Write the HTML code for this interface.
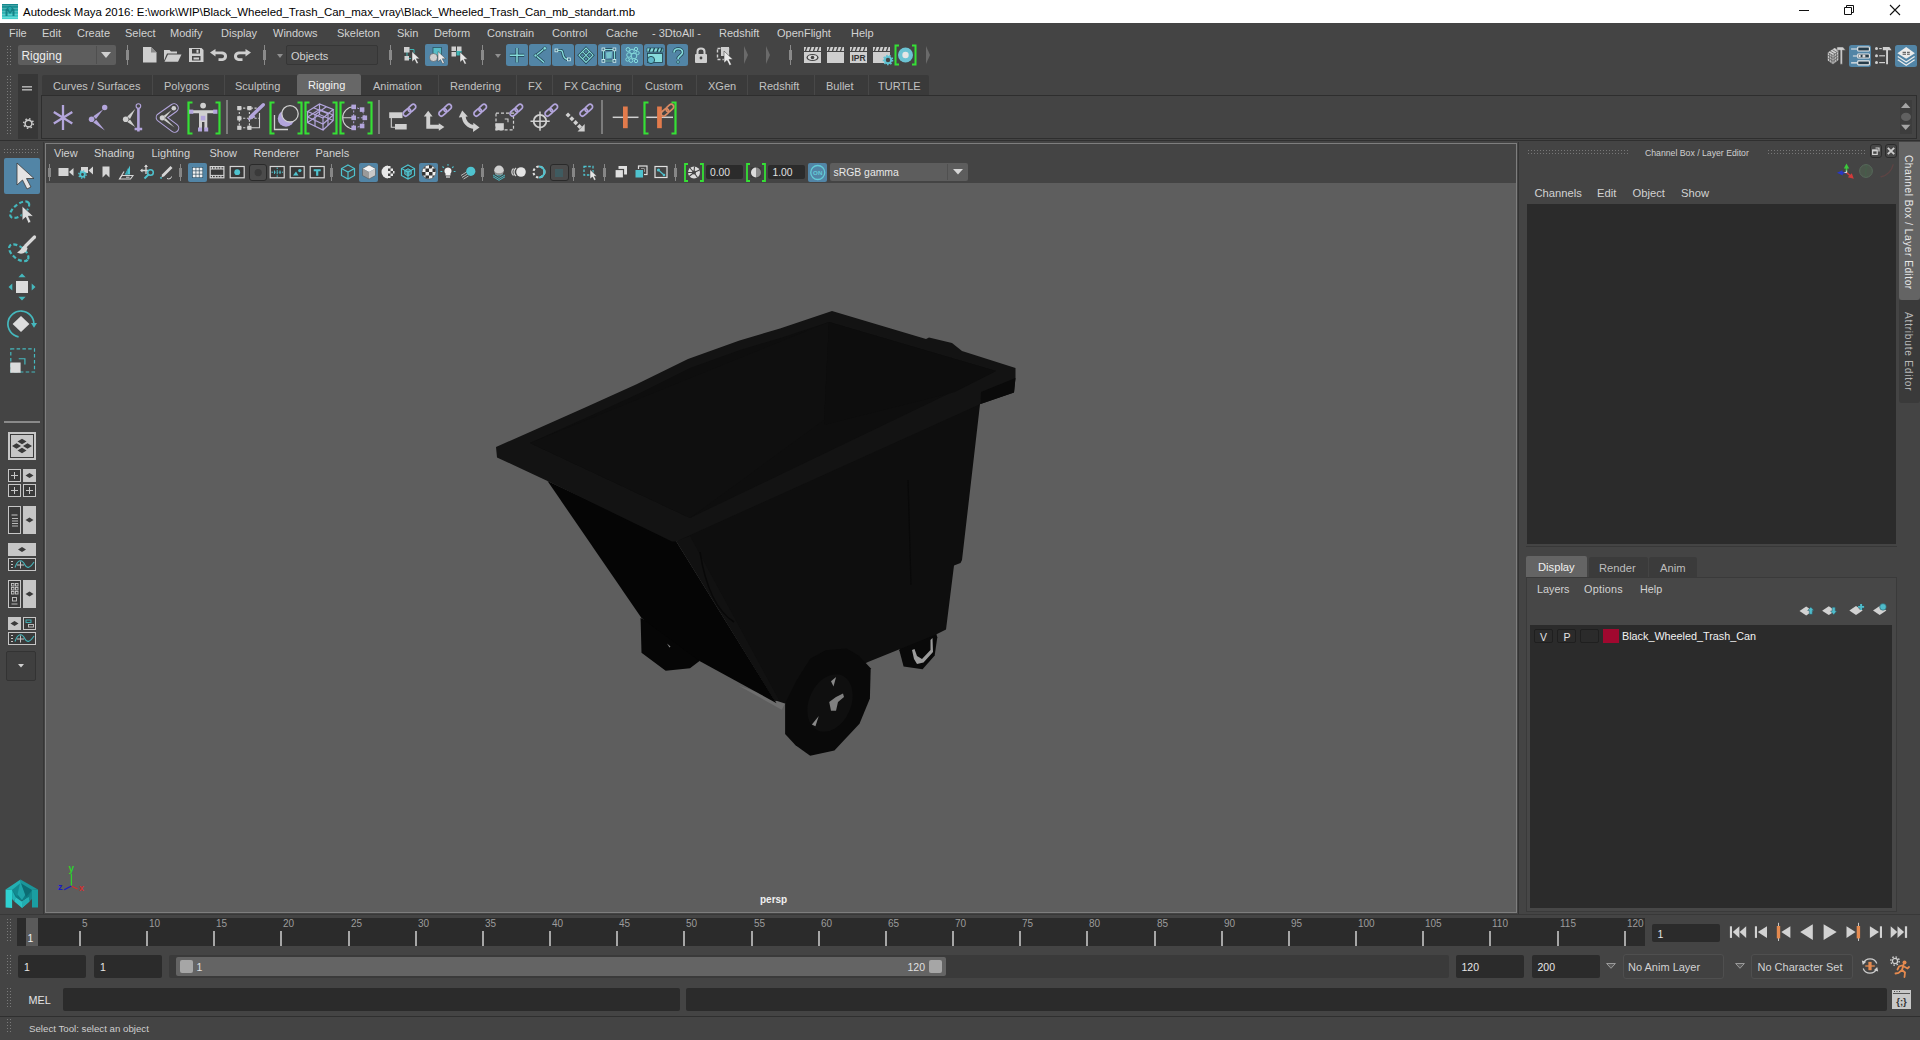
<!DOCTYPE html>
<html lang="en">
<head>
<meta charset="utf-8">
<title>Autodesk Maya 2016</title>
<style>
html,body{margin:0;padding:0;background:#444444;}
body{width:1920px;height:1040px;overflow:hidden;font-family:"Liberation Sans",sans-serif;}
#app{position:relative;width:1920px;height:1040px;background:#444444;overflow:hidden;}
#app div,#app svg,#app span.t{position:absolute;box-sizing:border-box;}
#app svg{overflow:visible;}
span.t{white-space:pre;line-height:normal;font-family:"Liberation Sans",sans-serif;}
</style>
</head>
<body>
<div id="app">
<div style="left:0px;top:0px;width:1920px;height:23px;background:#ffffff;"></div>
<svg style="left:2px;top:4px;" width="16" height="15" viewBox="0 0 16 15"><rect x="0" y="0.0" width="16" height="1.600" fill="rgb(20,136,141)"/><rect x="0" y="1.5" width="16" height="1.600" fill="rgb(25,144,148)"/><rect x="0" y="3.0" width="16" height="1.600" fill="rgb(30,152,155)"/><rect x="0" y="4.5" width="16" height="1.600" fill="rgb(36,160,162)"/><rect x="0" y="6.0" width="16" height="1.600" fill="rgb(41,168,170)"/><rect x="0" y="7.5" width="16" height="1.600" fill="rgb(47,177,177)"/><rect x="0" y="9.0" width="16" height="1.600" fill="rgb(52,185,184)"/><rect x="0" y="10.5" width="16" height="1.600" fill="rgb(57,193,192)"/><rect x="0" y="12.0" width="16" height="1.600" fill="rgb(63,201,199)"/><rect x="0" y="13.5" width="16" height="1.600" fill="rgb(68,209,206)"/><path d="M3.500 12V5.500L8 1.500L12.500 5.500V12H10.500V7L8 10L5.500 7V12Z" fill="#0f7a80" opacity=".85"/><path d="M6 4L8 8L10 4L8 2.500Z" fill="#27aab0" opacity=".9"/></svg>
<span class="t" style="left:23px;top:5.64px;font-size:11.45px;color:#000000;">Autodesk Maya 2016: E:\work\WIP\Black_Wheeled_Trash_Can_max_vray\Black_Wheeled_Trash_Can_mb_standart.mb</span>
<svg style="left:1798px;top:4px;" width="12" height="14" viewBox="0 0 12 14"><path d="M1 6.5H11" stroke="#111" stroke-width="1" fill="none"/></svg>
<svg style="left:1843px;top:3px;" width="12" height="14" viewBox="0 0 12 14"><path d="M1.5 4.5H8.5V11.5H1.5ZM3.5 4.5V2.5H10.5V9.5H8.5" stroke="#111" stroke-width="1" fill="none"/></svg>
<svg style="left:1889px;top:4px;" width="12" height="14" viewBox="0 0 12 14"><path d="M1 1L11 11M11 1L1 11" stroke="#111" stroke-width="1.1" fill="none"/></svg>
<span class="t" style="left:9px;top:27.04px;font-size:11px;color:#d2d2d2;">File</span>
<span class="t" style="left:42px;top:27.04px;font-size:11px;color:#d2d2d2;">Edit</span>
<span class="t" style="left:77px;top:27.04px;font-size:11px;color:#d2d2d2;">Create</span>
<span class="t" style="left:125px;top:27.04px;font-size:11px;color:#d2d2d2;">Select</span>
<span class="t" style="left:170px;top:27.04px;font-size:11px;color:#d2d2d2;">Modify</span>
<span class="t" style="left:221px;top:27.04px;font-size:11px;color:#d2d2d2;">Display</span>
<span class="t" style="left:273px;top:27.04px;font-size:11px;color:#d2d2d2;">Windows</span>
<span class="t" style="left:337px;top:27.04px;font-size:11px;color:#d2d2d2;">Skeleton</span>
<span class="t" style="left:397px;top:27.04px;font-size:11px;color:#d2d2d2;">Skin</span>
<span class="t" style="left:434px;top:27.04px;font-size:11px;color:#d2d2d2;">Deform</span>
<span class="t" style="left:487px;top:27.04px;font-size:11px;color:#d2d2d2;">Constrain</span>
<span class="t" style="left:552px;top:27.04px;font-size:11px;color:#d2d2d2;">Control</span>
<span class="t" style="left:606px;top:27.04px;font-size:11px;color:#d2d2d2;">Cache</span>
<span class="t" style="left:652px;top:27.04px;font-size:11px;color:#d2d2d2;">- 3DtoAll -</span>
<span class="t" style="left:719px;top:27.04px;font-size:11px;color:#d2d2d2;">Redshift</span>
<span class="t" style="left:777px;top:27.04px;font-size:11px;color:#d2d2d2;">OpenFlight</span>
<span class="t" style="left:851px;top:27.04px;font-size:11px;color:#d2d2d2;">Help</span>
<svg style="left:7px;top:46px;" width="4" height="21" viewBox="0 0 4 21"><rect x="0" y="0" width="1" height="1" fill="#7a7a7a"/><rect x="3" y="0" width="1" height="1" fill="#7a7a7a"/><rect x="0" y="3" width="1" height="1" fill="#7a7a7a"/><rect x="3" y="3" width="1" height="1" fill="#7a7a7a"/><rect x="0" y="6" width="1" height="1" fill="#7a7a7a"/><rect x="3" y="6" width="1" height="1" fill="#7a7a7a"/><rect x="0" y="9" width="1" height="1" fill="#7a7a7a"/><rect x="3" y="9" width="1" height="1" fill="#7a7a7a"/><rect x="0" y="12" width="1" height="1" fill="#7a7a7a"/><rect x="3" y="12" width="1" height="1" fill="#7a7a7a"/><rect x="0" y="15" width="1" height="1" fill="#7a7a7a"/><rect x="3" y="15" width="1" height="1" fill="#7a7a7a"/><rect x="0" y="18" width="1" height="1" fill="#7a7a7a"/><rect x="3" y="18" width="1" height="1" fill="#7a7a7a"/></svg>
<div style="left:18px;top:45px;width:98px;height:20px;background:#5d5d5d;border-radius:2px;"></div>
<div style="left:96px;top:46px;width:1px;height:18px;background:#4f4f4f;"></div>
<span class="t" style="left:21.5px;top:49.23px;font-size:11.9px;color:#ececec;">Rigging</span>
<svg style="left:101px;top:52px;" width="10" height="6" viewBox="0 0 10 6"><path d="M0 0H10L5 6Z" fill="#d0d0d0"/></svg>
<div style="left:127px;top:45px;width:1px;height:20px;background:#8a8a8a;"></div><div style="left:126px;top:50px;width:3px;height:10px;background:#8a8a8a;"></div>
<svg style="left:143px;top:47px;" width="14" height="16" viewBox="0 0 14 16"><path d="M0 0H8L13.500 5.500V15.500H0Z" fill="#cfcfcf"/><path d="M8 0V5.500H13.500Z" fill="#8a8a8a"/></svg>
<svg style="left:164px;top:49px;" width="18" height="13" viewBox="0 0 18 13"><path d="M0 1H5.500L7 2.500H13V4.500H3L0 11.500Z" fill="#cfcfcf"/><path d="M4 5.500H17.500L14 12.800H0.500Z" fill="#cfcfcf"/></svg>
<svg style="left:189px;top:48px;" width="15" height="14" viewBox="0 0 15 14"><path d="M0 0H12.500L14.500 2V14H0Z" fill="#cfcfcf"/><rect x="3" y="1" width="8" height="4.500" fill="#444"/><rect x="7.500" y="1.800" width="2" height="3" fill="#cfcfcf"/><rect x="3" y="8" width="8.500" height="4.500" fill="#444"/><rect x="4.500" y="9.500" width="5.500" height="2" fill="#cfcfcf"/></svg>
<svg style="left:210px;top:49px;" width="17" height="12" viewBox="0 0 17 12"><path d="M0 3.500L5.500 0V2.500H11C15 2.500 17 4.500 17 7.200C17 10 15 12 11 12H8.500V9.300H11C13 9.300 14 8.500 14 7.200C14 6 13 5.200 11 5.200H5.500V7.500Z" fill="#cfcfcf"/></svg>
<svg style="left:234px;top:49px;" width="17" height="12" viewBox="0 0 17 12"><path d="M17 3.500L11.500 0V2.500H6C2 2.500 0 4.500 0 7.200C0 10 2 12 6 12H8.500V9.300H6C4 9.300 3 8.500 3 7.200C3 6 4 5.200 6 5.200H11.500V7.500Z" fill="#cfcfcf"/></svg>
<div style="left:264px;top:45px;width:1px;height:20px;background:#8a8a8a;"></div><div style="left:263px;top:50px;width:3px;height:10px;background:#8a8a8a;"></div>
<svg style="left:277px;top:54px;" width="6" height="4" viewBox="0 0 6 4"><path d="M0 0H6L3 4Z" fill="#8f8f8f"/></svg>
<div style="left:286px;top:45px;width:92px;height:20px;background:#414141;border:1px solid #363636;border-radius:2px;"></div>
<span class="t" style="left:291px;top:50.04px;font-size:11px;color:#d2d2d2;">Objects</span>
<div style="left:390px;top:45px;width:1px;height:20px;background:#8a8a8a;"></div><div style="left:389px;top:50px;width:3px;height:10px;background:#8a8a8a;"></div>
<svg style="left:403px;top:46px;" width="18" height="18" viewBox="0 0 18 18"><path d="M4 6V12.500H8M6.500 3.500H11V7" stroke="#3fb5b5" fill="none"/><rect x="1" y="1" width="5.500" height="5.500" fill="#cfcfcf"/><rect x="1.500" y="10" width="4.500" height="4.500" fill="#cfcfcf"/><path transform="translate(9,5.5) scale(0.85)" d="M0 0V12L3 9.5L5.5 14.5L7.5 13.5L5 8.5H9Z" fill="#e8e8e8" stroke="#333" stroke-width=".5"/></svg>
<div style="left:425px;top:44px;width:22.5px;height:22px;background:#5285a6;border-radius:2px;"></div>
<svg style="left:428px;top:46px;" width="18" height="18" viewBox="0 0 18 18"><rect x="5" y="1.500" width="8.500" height="8.500" fill="#57bcc6" stroke="#2c5560" stroke-width=".8"/><circle cx="5.500" cy="11.500" r="4" fill="#cfcfcf" stroke="#444" stroke-width=".5"/><path transform="translate(10,5.5) scale(0.85)" d="M0 0V12L3 9.5L5.5 14.5L7.5 13.5L5 8.5H9Z" fill="#e8e8e8" stroke="#333" stroke-width=".5"/></svg>
<svg style="left:451px;top:46px;" width="18" height="18" viewBox="0 0 18 18"><rect x="5.500" y="4.500" width="5" height="5" fill="#3fb5b5"/><rect x="0.500" y="0.500" width="4.500" height="4.500" fill="#cfcfcf"/><rect x="6" y="0.500" width="4.500" height="4.500" fill="#cfcfcf"/><rect x="0.500" y="6" width="4.500" height="4.500" fill="#cfcfcf"/><path transform="translate(9,6) scale(0.85)" d="M0 0V12L3 9.5L5.5 14.5L7.5 13.5L5 8.5H9Z" fill="#e8e8e8" stroke="#333" stroke-width=".5"/></svg>
<div style="left:482px;top:45px;width:1px;height:20px;background:#8a8a8a;"></div><div style="left:481px;top:50px;width:3px;height:10px;background:#8a8a8a;"></div>
<svg style="left:495px;top:54px;" width="6" height="4" viewBox="0 0 6 4"><path d="M0 0H6L3 4Z" fill="#8f8f8f"/></svg>
<div style="left:506.4px;top:44px;width:21.8px;height:22px;background:#5285a6;border-radius:2.500px;"></div>
<svg style="left:506.4px;top:44px;" width="22" height="22" viewBox="0 0 22 22"><path d="M11 4V18.500M3.800 11.200H18.200" stroke="#1d3f4c" stroke-width="2.9" fill="none" /><path d="M11 4V18.500M3.800 11.200H18.200" stroke="#86dcdc" stroke-width="1.5" fill="none" /></svg>
<div style="left:529.3px;top:44px;width:21.8px;height:22px;background:#5285a6;border-radius:2.500px;"></div>
<svg style="left:529.3px;top:44px;" width="22" height="22" viewBox="0 0 22 22"><path d="M15.500 4.500L7 11.500L15 18.500" stroke="#1d3f4c" stroke-width="2.9" fill="none" /><path d="M15.500 4.500L7 11.500L15 18.500" stroke="#86dcdc" stroke-width="1.5" fill="none" /><circle cx="15.800" cy="4.300" r="1.700" fill="#86dcdc" stroke="#1d3f4c" stroke-width=".6"/><circle cx="6.500" cy="11.500" r="1.500" fill="#86dcdc" stroke="#1d3f4c" stroke-width=".6"/></svg>
<div style="left:552.2px;top:44px;width:21.8px;height:22px;background:#5285a6;border-radius:2.500px;"></div>
<svg style="left:552.2px;top:44px;" width="22" height="22" viewBox="0 0 22 22"><path d="M5 6.500H9C11 6.500 10.500 9.500 11.500 12C12.500 15 14 15.500 17 15.500" stroke="#1d3f4c" stroke-width="2.8" fill="none" /><path d="M5 6.500H9C11 6.500 10.500 9.500 11.500 12C12.500 15 14 15.500 17 15.500" stroke="#86dcdc" stroke-width="1.4" fill="none" /><rect x="3" y="5" width="2.8" height="2.8" fill="#3f6f88" stroke="#d8f2f2" stroke-width=".8"/><rect x="15.5" y="14" width="2.8" height="2.8" fill="#3f6f88" stroke="#d8f2f2" stroke-width=".8"/></svg>
<div style="left:575.0px;top:44px;width:21.8px;height:22px;background:#5285a6;border-radius:2.500px;"></div>
<svg style="left:575.0px;top:44px;" width="22" height="22" viewBox="0 0 22 22"><path d="M11 4L18 11.200L11 18.500L4 11.200ZM7.500 7.600L14.500 14.800M14.500 7.600L7.500 14.800" stroke="#1d3f4c" stroke-width="2.5" fill="none" /><path d="M11 4L18 11.200L11 18.500L4 11.200ZM7.500 7.600L14.500 14.800M14.500 7.600L7.500 14.800" stroke="#86dcdc" stroke-width="1.1" fill="none" /></svg>
<div style="left:597.9px;top:44px;width:21.8px;height:22px;background:#5285a6;border-radius:2.500px;"></div>
<svg style="left:597.9px;top:44px;" width="22" height="22" viewBox="0 0 22 22"><path d="M5.500 5.500H16.500V17H5.500Z" stroke="#1d3f4c" stroke-width="2.6" fill="none" /><path d="M5.500 5.500H16.500V17H5.500Z" stroke="#86dcdc" stroke-width="1.2" fill="none" /><path d="M8 8.500L14 7.500L13.500 14L8.500 14.500Z" fill="#86dcdc" opacity=".7"/><rect x="4" y="4" width="2.8" height="2.8" fill="#3f6f88" stroke="#d8f2f2" stroke-width=".8"/><rect x="15" y="4" width="2.8" height="2.8" fill="#3f6f88" stroke="#d8f2f2" stroke-width=".8"/><rect x="4" y="15.5" width="2.8" height="2.8" fill="#3f6f88" stroke="#d8f2f2" stroke-width=".8"/><rect x="15" y="15.5" width="2.8" height="2.8" fill="#3f6f88" stroke="#d8f2f2" stroke-width=".8"/></svg>
<div style="left:620.8px;top:44px;width:21.8px;height:22px;background:#5285a6;border-radius:2.500px;"></div>
<svg style="left:620.8px;top:44px;" width="22" height="22" viewBox="0 0 22 22"><g stroke="#86dcdc" stroke-width="1" fill="#4b86a5"><circle cx="7" cy="5.500" r="1.900"/><circle cx="11" cy="7.500" r="2.300"/><circle cx="15" cy="5" r="1.700"/><circle cx="8" cy="11" r="2.300"/><circle cx="13" cy="12" r="2.800"/><circle cx="16.500" cy="9" r="1.700"/><circle cx="6.500" cy="15.500" r="1.700"/><circle cx="10" cy="16.500" r="1.900"/><circle cx="15" cy="17" r="1.700"/></g></svg>
<div style="left:643.7px;top:44px;width:21.8px;height:22px;background:#5285a6;border-radius:2.500px;"></div>
<svg style="left:643.7px;top:44px;" width="22" height="22" viewBox="0 0 22 22"><rect x="3.500" y="9.500" width="15" height="9" fill="#86dcdc" stroke="#1d3f4c" stroke-width=".8"/><path d="M3 4H19V8H3Z" fill="#86dcdc" stroke="#1d3f4c" stroke-width=".6"/><path d="M6.500 4L5 8M10.500 4L9 8M14.500 4L13 8M18 4L16.500 8" stroke="#1d3f4c" stroke-width="1.300"/><circle cx="7" cy="16" r="3.600" fill="#5fb9c9" stroke="#1d3f4c" stroke-width=".9"/></svg>
<div style="left:666.6px;top:44px;width:21.8px;height:22px;background:#5285a6;border-radius:2.500px;"></div>
<svg style="left:666.6px;top:44px;" width="22" height="22" viewBox="0 0 22 22"><path d="M7 8.500C7 3.500 15.500 3.500 15.500 8.500C15.500 11.500 11 11.500 11 15" stroke="#1d3f4c" stroke-width="3.1" fill="none" /><path d="M7 8.500C7 3.500 15.500 3.500 15.500 8.500C15.500 11.500 11 11.500 11 15" stroke="#86dcdc" stroke-width="1.7" fill="none" /><circle cx="11" cy="18" r="1.400" fill="#86dcdc" stroke="#1d3f4c" stroke-width=".7"/></svg>
<svg style="left:694px;top:46px;" width="14" height="18" viewBox="0 0 14 18"><path d="M3.5 8V5.5C3.5 1.5 10.5 1.5 10.5 5.5V8" stroke="#cfcfcf" stroke-width="2" fill="none"/><rect x="1" y="8" width="12" height="9" rx="1" fill="#cfcfcf"/><circle cx="7" cy="12" r="1.4" fill="#444"/></svg>
<svg style="left:716px;top:46px;" width="18" height="18" viewBox="0 0 18 18"><rect x="1.5" y="2.5" width="11" height="11" stroke="#cfcfcf" stroke-width="1.4" stroke-dasharray="3 2" fill="none"/><rect x="5" y="1" width="8" height="9" fill="#cfcfcf"/><path transform="translate(8,5) scale(1.0)" d="M0 0V12L3 9.5L5.5 14.5L7.5 13.5L5 8.5H9Z" fill="#e8e8e8" stroke="#333" stroke-width=".5"/></svg>
<svg style="left:744px;top:46px;" width="4" height="18" viewBox="0 0 4 18"><path d="M0 0L4 9.0L0 18Z" fill="#6a6a6a"/></svg>
<svg style="left:766px;top:46px;" width="4" height="18" viewBox="0 0 4 18"><path d="M0 0L4 9.0L0 18Z" fill="#6a6a6a"/></svg>
<div style="left:790px;top:45px;width:1px;height:20px;background:#8a8a8a;"></div><div style="left:789px;top:50px;width:3px;height:10px;background:#8a8a8a;"></div>
<svg style="left:804px;top:47px;" width="17" height="16" viewBox="0 0 17 16"><path d="M0 0H17V4H0Z" fill="#cfcfcf"/><path d="M3 0L1.5 4M7 0L5.5 4M11 0L9.5 4M15 0L13.5 4" stroke="#444" stroke-width="1.3"/><rect x="0" y="5" width="17" height="11" fill="#cfcfcf"/><ellipse cx="8.5" cy="10.5" rx="6" ry="3.6" fill="#444"/><ellipse cx="8.5" cy="10.5" rx="4.6" ry="2.4" fill="#ddd"/><circle cx="8.5" cy="10.5" r="1.8" fill="#444"/></svg>
<svg style="left:827px;top:47px;" width="17" height="16" viewBox="0 0 17 16"><path d="M0 0H17V4H0Z" fill="#cfcfcf"/><path d="M3 0L1.5 4M7 0L5.5 4M11 0L9.5 4M15 0L13.5 4" stroke="#444" stroke-width="1.3"/><rect x="0" y="5" width="17" height="11" fill="#cfcfcf"/></svg>
<svg style="left:850px;top:47px;" width="17" height="16" viewBox="0 0 17 16"><path d="M0 0H17V4H0Z" fill="#cfcfcf"/><path d="M3 0L1.5 4M7 0L5.5 4M11 0L9.5 4M15 0L13.5 4" stroke="#444" stroke-width="1.3"/><rect x="0" y="5" width="17" height="11" fill="#cfcfcf"/><text x="8.5" y="14.3" font-size="8.5" font-weight="bold" text-anchor="middle" fill="#333" font-family="Liberation Sans, sans-serif">IPR</text></svg>
<svg style="left:873px;top:47px;" width="20" height="17" viewBox="0 0 20 17"><path d="M0 0H17V4H0Z" fill="#cfcfcf"/><path d="M3 0L1.5 4M7 0L5.5 4M11 0L9.5 4M15 0L13.5 4" stroke="#444" stroke-width="1.3"/><rect x="0" y="5" width="17" height="11" fill="#cfcfcf"/><circle cx="15" cy="13" r="3.2" fill="#444" stroke="#5fc4d4" stroke-width="2"/><circle cx="15" cy="13" r="4.6" fill="none" stroke="#5fc4d4" stroke-width="1.4" stroke-dasharray="1.6 1.6"/></svg>
<svg style="left:894px;top:44px;" width="23" height="22" viewBox="0 0 23 22"><path d="M5 1.5H1.5V20.5H5M18 1.5H21.5V20.5H18" stroke="#35e035" stroke-width="2" fill="none"/><circle cx="11.5" cy="11" r="7.5" fill="#6cc3d3"/><circle cx="11.5" cy="11" r="3.2" fill="#e6e6e6"/></svg>
<svg style="left:926px;top:46px;" width="4" height="18" viewBox="0 0 4 18"><path d="M0 0L4 9.0L0 18Z" fill="#6a6a6a"/></svg>
<svg style="left:1827px;top:46px;" width="19" height="19" viewBox="0 0 19 19"><path d="M0.800 6.500L7.500 2L11.300 4V14L6 18.200L0.800 14.500Z" fill="#cfcfcf"/><path d="M0.800 6.500L6 9.500L11.300 5.500M6 9.500V18.200M0.800 9.200L6 12.400L11.300 8.500M0.800 11.900L6 15.300L11.300 11.300M2.600 7.500V15.700M4.300 8.500V17M7.800 8.200V16.800M9.600 6.800V15.400M3 5L8 8M5.200 3.500L10 6.500" stroke="#555" stroke-width=".7" fill="none"/><path d="M9.900 1H16L18.600 4.300H15.400V18.200H13.200V4.300H9.900Z" fill="#cfcfcf" stroke="#444" stroke-width=".5"/></svg>
<div style="left:1849px;top:45px;width:22.3px;height:22.2px;background:#5285a6;border-radius:2.500px;"></div>
<svg style="left:1849px;top:45px;" width="22" height="22" viewBox="0 0 22 22"><g stroke="#ececec" stroke-width="1.100" fill="#263c4a"><rect x="8.700" y="2" width="11.700" height="4" rx=".8"/><rect x="8.700" y="9" width="11.700" height="4" rx=".8"/><rect x="8.700" y="15.900" width="11.700" height="4" rx=".8"/></g><path d="M2.100 4H8M3.900 11H8M2.100 17.900H8" stroke="#ececec" stroke-width="1.200"/><circle cx="14.900" cy="11" r="1.600" fill="#d8d8d8"/><rect x="9.600" y="9.800" width="2" height="2.400" fill="#ececec"/></svg>
<svg style="left:1874px;top:46px;" width="19" height="19" viewBox="0 0 19 19"><g fill="#cfcfcf"><circle cx="2.500" cy="2.600" r="1.500"/><circle cx="2.500" cy="9.800" r="1.500"/><circle cx="2.500" cy="16.600" r="1.500"/><rect x="5.200" y="2" width="2.600" height="1.200"/><rect x="5.200" y="9.200" width="5.800" height="1.200"/><rect x="5.200" y="16" width="5.800" height="1.200"/><path d="M8.800 1H15.400L17.600 4.300H14V18.200H12.100V4.300H8.800Z"/></g></svg>
<div style="left:1895px;top:45px;width:22.3px;height:22.2px;background:#5285a6;border-radius:2.500px;"></div>
<svg style="left:1895px;top:45px;" width="22" height="22" viewBox="0 0 22 22"><path d="M2.800 14.800L11.200 20.300L19.600 14.800" stroke="#ececec" stroke-width="1.300" fill="none"/><path d="M2.800 11.500L11.200 17L19.600 11.500" stroke="#ececec" stroke-width="1.300" fill="none"/><path d="M11.200 2L19.900 8.200L11.200 13.700L2.400 8.200Z" fill="#ececec"/><path d="M7.600 7.300H11M12 7.300H14.800M7.600 9.200H11M12 9.200H14.800" stroke="#333" stroke-width=".9"/></svg>
<svg style="left:7px;top:76px;" width="4" height="62" viewBox="0 0 4 62"><rect x="0" y="0" width="1" height="1" fill="#7a7a7a"/><rect x="3" y="0" width="1" height="1" fill="#7a7a7a"/><rect x="0" y="3" width="1" height="1" fill="#7a7a7a"/><rect x="3" y="3" width="1" height="1" fill="#7a7a7a"/><rect x="0" y="6" width="1" height="1" fill="#7a7a7a"/><rect x="3" y="6" width="1" height="1" fill="#7a7a7a"/><rect x="0" y="9" width="1" height="1" fill="#7a7a7a"/><rect x="3" y="9" width="1" height="1" fill="#7a7a7a"/><rect x="0" y="12" width="1" height="1" fill="#7a7a7a"/><rect x="3" y="12" width="1" height="1" fill="#7a7a7a"/><rect x="0" y="15" width="1" height="1" fill="#7a7a7a"/><rect x="3" y="15" width="1" height="1" fill="#7a7a7a"/><rect x="0" y="18" width="1" height="1" fill="#7a7a7a"/><rect x="3" y="18" width="1" height="1" fill="#7a7a7a"/><rect x="0" y="21" width="1" height="1" fill="#7a7a7a"/><rect x="3" y="21" width="1" height="1" fill="#7a7a7a"/><rect x="0" y="24" width="1" height="1" fill="#7a7a7a"/><rect x="3" y="24" width="1" height="1" fill="#7a7a7a"/><rect x="0" y="27" width="1" height="1" fill="#7a7a7a"/><rect x="3" y="27" width="1" height="1" fill="#7a7a7a"/><rect x="0" y="30" width="1" height="1" fill="#7a7a7a"/><rect x="3" y="30" width="1" height="1" fill="#7a7a7a"/><rect x="0" y="33" width="1" height="1" fill="#7a7a7a"/><rect x="3" y="33" width="1" height="1" fill="#7a7a7a"/><rect x="0" y="36" width="1" height="1" fill="#7a7a7a"/><rect x="3" y="36" width="1" height="1" fill="#7a7a7a"/><rect x="0" y="39" width="1" height="1" fill="#7a7a7a"/><rect x="3" y="39" width="1" height="1" fill="#7a7a7a"/><rect x="0" y="42" width="1" height="1" fill="#7a7a7a"/><rect x="3" y="42" width="1" height="1" fill="#7a7a7a"/><rect x="0" y="45" width="1" height="1" fill="#7a7a7a"/><rect x="3" y="45" width="1" height="1" fill="#7a7a7a"/><rect x="0" y="48" width="1" height="1" fill="#7a7a7a"/><rect x="3" y="48" width="1" height="1" fill="#7a7a7a"/><rect x="0" y="51" width="1" height="1" fill="#7a7a7a"/><rect x="3" y="51" width="1" height="1" fill="#7a7a7a"/><rect x="0" y="54" width="1" height="1" fill="#7a7a7a"/><rect x="3" y="54" width="1" height="1" fill="#7a7a7a"/><rect x="0" y="57" width="1" height="1" fill="#7a7a7a"/><rect x="3" y="57" width="1" height="1" fill="#7a7a7a"/></svg>
<div style="left:18px;top:74px;width:20px;height:65px;background:#373737;"></div>
<svg style="left:22px;top:86px;" width="10" height="5" viewBox="0 0 10 5"><rect x="0" y="0" width="10" height="1.600" fill="#acacac"/><rect x="0" y="3" width="10" height="1.600" fill="#acacac"/></svg>
<svg style="left:23px;top:118px;" width="11" height="11" viewBox="0 0 11 11"><circle cx="5.5" cy="5.5" r="3.4" fill="none" stroke="#c8c8c8" stroke-width="1.6"/><circle cx="5.5" cy="5.5" r="4.8" fill="none" stroke="#c8c8c8" stroke-width="1.6" stroke-dasharray="1.5 2.27"/></svg>
<div style="left:41.5px;top:75px;width:887px;height:21px;background:#3a3a3a;border-radius:2px 2px 0 0;"></div>
<span class="t" style="left:53px;top:79.64px;font-size:11px;color:#c2c2c2;">Curves / Surfaces</span>
<div style="left:152px;top:75px;width:1px;height:20px;background:#484848;"></div>
<span class="t" style="left:164px;top:79.64px;font-size:11px;color:#c2c2c2;">Polygons</span>
<div style="left:224px;top:75px;width:1px;height:20px;background:#484848;"></div>
<span class="t" style="left:235px;top:79.64px;font-size:11px;color:#c2c2c2;">Sculpting</span>
<div style="left:296.5px;top:74px;width:64.5px;height:22px;background:#676767;border-radius:2.500px 2.500px 0 0;"></div>
<span class="t" style="left:308px;top:78.74px;font-size:11px;color:#f2f2f2;">Rigging</span>
<span class="t" style="left:373px;top:79.64px;font-size:11px;color:#c2c2c2;">Animation</span>
<div style="left:438px;top:75px;width:1px;height:20px;background:#484848;"></div>
<span class="t" style="left:450px;top:79.64px;font-size:11px;color:#c2c2c2;">Rendering</span>
<div style="left:516px;top:75px;width:1px;height:20px;background:#484848;"></div>
<span class="t" style="left:528px;top:79.64px;font-size:11px;color:#c2c2c2;">FX</span>
<div style="left:552px;top:75px;width:1px;height:20px;background:#484848;"></div>
<span class="t" style="left:564px;top:79.64px;font-size:11px;color:#c2c2c2;">FX Caching</span>
<div style="left:632px;top:75px;width:1px;height:20px;background:#484848;"></div>
<span class="t" style="left:645px;top:79.64px;font-size:11px;color:#c2c2c2;">Custom</span>
<div style="left:696px;top:75px;width:1px;height:20px;background:#484848;"></div>
<span class="t" style="left:708px;top:79.64px;font-size:11px;color:#c2c2c2;">XGen</span>
<div style="left:747px;top:75px;width:1px;height:20px;background:#484848;"></div>
<span class="t" style="left:759px;top:79.64px;font-size:11px;color:#c2c2c2;">Redshift</span>
<div style="left:814px;top:75px;width:1px;height:20px;background:#484848;"></div>
<span class="t" style="left:826px;top:79.64px;font-size:11px;color:#c2c2c2;">Bullet</span>
<div style="left:868px;top:75px;width:1px;height:20px;background:#484848;"></div>
<span class="t" style="left:878px;top:79.64px;font-size:11px;color:#c2c2c2;">TURTLE</span>
<div style="left:41px;top:95px;width:1876px;height:44px;background:#444;border:1px solid #2e2e2e;"></div>
<div style="left:1900px;top:100px;width:12px;height:34px;background:#3d3d3d;"></div>
<svg style="left:1901px;top:102px;" width="10" height="30" viewBox="0 0 10 30"><path d="M0 6L4.700 0.700L9.400 6Z" fill="#a4a4a4"/><ellipse cx="5" cy="14.900" rx="5" ry="4.100" fill="#606060"/><path d="M0 22.800L4.700 28.100L9.400 22.800Z" fill="#a4a4a4"/></svg>
<div style="left:0px;top:140px;width:1920px;height:1px;background:#2f2f2f;"></div>
<svg style="left:46.2px;top:100.5px;" width="34" height="34" viewBox="0 0 34 34"><path d="M17 4V29M7.800 11L26.300 22.500M26.300 11L7.800 22.500" stroke="#b3a5dc" stroke-width="2.300" fill="none"/></svg>
<svg style="left:81.0px;top:100.5px;" width="34" height="34" viewBox="0 0 34 34"><circle cx="23.700" cy="6.500" r="2.700" fill="#b3a5dc"/><circle cx="10.600" cy="18.300" r="2.800" fill="#b3a5dc"/><path d="M12.300 15.300L15 18L22.300 8.300Z" fill="#b3a5dc"/><path d="M12.300 21.500L15.200 18.800L23.900 29.400Z" fill="#b3a5dc"/></svg>
<svg style="left:116.0px;top:100.5px;" width="34" height="34" viewBox="0 0 34 34"><circle cx="9.700" cy="18.300" r="2.800" fill="#d0d0d0"/><path d="M11.300 15.500L14 18L19.200 8Z" fill="#d0d0d0"/><path d="M11.300 21L14 18.600L19.200 26Z" fill="#d0d0d0"/><path d="M22.400 6V30.500M18.600 28H26.200" stroke="#b3a5dc" stroke-width="2.600" fill="none"/><circle cx="22.400" cy="5" r="2.300" fill="#444" stroke="#b3a5dc" stroke-width="1.100"/></svg>
<svg style="left:150.0px;top:100.5px;" width="34" height="34" viewBox="0 0 34 34"><path d="M24 7L10.500 16.500L24.500 27" stroke="#b3a5dc" stroke-width="9.600" stroke-linecap="round" stroke-linejoin="round" fill="none"/><path d="M24 7L10.500 16.500L24.500 27" stroke="#444" stroke-width="7.400" stroke-linecap="round" stroke-linejoin="round" fill="none"/><circle cx="23.800" cy="7.300" r="2.300" fill="#d0d0d0"/><circle cx="12.300" cy="16.800" r="2.600" fill="#d0d0d0"/><path d="M13.800 14.800L15.300 16.800L22 8.800Z" fill="#d0d0d0"/><path d="M13.800 19L15.500 17.300L24.500 26.500Z" fill="#d0d0d0"/></svg>
<svg style="left:186.6px;top:100.5px;" width="34" height="34" viewBox="0 0 34 34"><path d="M5.500 1.5H1.500V32.5H5.500M28.5 1.5H32.5V32.5H28.5" stroke="#35e035" stroke-width="2.200" fill="none"/><circle cx="16.100" cy="4.600" r="2.900" fill="#d0d0d0"/><path d="M5 9.300H27.500V12.300H20.300V27.400H17.400V21H15V27.400H12V12.300H5Z" fill="#d0d0d0"/><rect x="2.1" y="8.6" width="4.2" height="4.2" fill="#b3a5dc"/><rect x="26.2" y="8.6" width="4.2" height="4.2" fill="#b3a5dc"/><rect x="13.8" y="14.8" width="4.6" height="4.6" fill="#b3a5dc"/><rect x="11" y="26.5" width="4" height="4" fill="#b3a5dc"/><rect x="17.2" y="26.5" width="4" height="4" fill="#b3a5dc"/></svg>
<div style="left:226px;top:100px;width:2px;height:34px;background:#7c7c7c;"></div>
<svg style="left:232.0px;top:100.5px;" width="34" height="34" viewBox="0 0 34 34"><g fill="none" stroke="#d0d0d0" stroke-width="1.100" stroke-dasharray="2.200 1.600"><path d="M7.300 7.100H27M7.300 17.300H27M7.300 26.800H17.500M7.300 7.100V26.800M17.400 7.100V26.800"/></g><path d="M27.500 12V26.800H19" stroke="#d0d0d0" stroke-width="1.100" fill="none"/><rect x="5.2" y="5" width="4.2" height="4.2" fill="#d0d0d0"/><rect x="15.3" y="5" width="4.2" height="4.2" fill="#d0d0d0"/><rect x="5.2" y="15.2" width="4.2" height="4.2" fill="#d0d0d0"/><rect x="5.2" y="24.7" width="4.2" height="4.2" fill="#d0d0d0"/><rect x="15.3" y="24.7" width="4.2" height="4.2" fill="#d0d0d0"/><path d="M31.300 3.700L19.500 15" stroke="#b3a5dc" stroke-width="3.400" stroke-linecap="round"/><path d="M21.500 12.500L16 18.200L23.500 16.500Z" fill="#b3a5dc"/><path d="M16 18.200L19.500 17.400" stroke="#b3a5dc" stroke-width="1.500"/></svg>
<svg style="left:268.6px;top:100.5px;" width="34" height="34" viewBox="0 0 34 34"><path d="M5.500 1.5H1.500V32.5H5.500M28.5 1.5H32.5V32.5H28.5" stroke="#35e035" stroke-width="2.200" fill="none"/><path d="M5.500 14V28.500H19" stroke="#d0d0d0" stroke-width="1.300" fill="none"/><circle cx="17" cy="17.500" r="8.200" fill="#b3a5dc"/><circle cx="21" cy="12.800" r="8.200" fill="#444" stroke="#d0d0d0" stroke-width="1.300"/></svg>
<svg style="left:303.5px;top:100.5px;" width="34" height="34" viewBox="0 0 34 34"><path d="M5.500 1.5H1.500V32.5H5.500M28.5 1.5H32.5V32.5H28.5" stroke="#35e035" stroke-width="2.200" fill="none"/><g stroke="#b3a5dc" stroke-width="1.200" fill="none"><path d="M3.600 10.500L15.500 3L29.200 8.500L19 17ZM3.600 10.500V21.500L19 29V17M29.200 8.500V19.500L19 29M15.500 3V13.500L3.600 21.500M15.500 13.500L29.200 19.500"/><path d="M3.600 16L19 23L29.200 14M15.500 8.500L3.600 16M15.500 8.500L29.200 14M11 13.700V25.300M24 12.800V24.300M9.500 6.800L24 12.800M22.300 5.700L11 13.700"/></g></svg>
<svg style="left:339.0px;top:100.5px;" width="34" height="34" viewBox="0 0 34 34"><path d="M5.500 1.5H1.500V32.5H5.500M28.5 1.5H32.5V32.5H28.5" stroke="#35e035" stroke-width="2.200" fill="none"/><path d="M14.700 5.800A11 11 0 0 0 14.700 27.800M3.700 16.800H14.700" stroke="#d0d0d0" stroke-width="1.100" fill="none"/><path d="M14.700 5.900V26.900M14.700 16.800H25.800M14.700 5.900L23.100 8.600L25.800 16.800L23.100 25L14.700 26.900" stroke="#b3a5dc" stroke-width="1" stroke-dasharray="2 1.600" fill="none"/><rect x="12.4" y="3.6" width="4.6" height="4.6" fill="#b3a5dc"/><rect x="20.8" y="6.3" width="4.6" height="4.6" fill="#b3a5dc"/><rect x="23.5" y="14.5" width="4.6" height="4.6" fill="#b3a5dc"/><rect x="20.8" y="22.7" width="4.6" height="4.6" fill="#b3a5dc"/><rect x="12.4" y="24.6" width="4.6" height="4.6" fill="#b3a5dc"/><rect x="12.4" y="14.5" width="4.6" height="4.6" fill="#b3a5dc"/></svg>
<div style="left:378px;top:100px;width:2px;height:34px;background:#7c7c7c;"></div>
<svg style="left:385.0px;top:100.5px;" width="34" height="34" viewBox="0 0 34 34"><rect x="4.200" y="11.300" width="13.300" height="5.800" fill="#d0d0d0"/><path d="M6.300 17V26.300H10" stroke="#d0d0d0" stroke-width="1.100" fill="none"/><rect x="10" y="23" width="11.700" height="5.500" fill="#d0d0d0"/><g transform="translate(24.5,9.2) rotate(-42)" fill="none" stroke="#b3a5dc" stroke-width="1.700"><rect x="-7.600" y="-2.500" width="8.600" height="5" rx="2.500"/><rect x="-1" y="-2.500" width="8.600" height="5" rx="2.500"/></g></svg>
<svg style="left:419.5px;top:100.5px;" width="34" height="34" viewBox="0 0 34 34"><path d="M8.200 9.700L12.600 15.400H10.200V23.800H18.800V22.200L24.400 26L18.800 29.700V27.700H6.300V15.400H3.800Z" fill="#d0d0d0"/><g transform="translate(25.2,9.2) rotate(-42)" fill="none" stroke="#b3a5dc" stroke-width="1.700"><rect x="-7.600" y="-2.500" width="8.600" height="5" rx="2.500"/><rect x="-1" y="-2.500" width="8.600" height="5" rx="2.500"/></g></svg>
<svg style="left:454.5px;top:100.5px;" width="34" height="34" viewBox="0 0 34 34"><path d="M8.500 14.500C9 21 13 25.500 19.500 26.200" stroke="#d0d0d0" stroke-width="3.800" fill="none"/><path d="M7.200 9.500L12.800 15.500L3.800 16.500Z" fill="#d0d0d0"/><path d="M18.300 21.800L24.500 26.500L18 31Z" fill="#d0d0d0"/><g transform="translate(25.2,9.2) rotate(-42)" fill="none" stroke="#b3a5dc" stroke-width="1.700"><rect x="-7.600" y="-2.500" width="8.600" height="5" rx="2.500"/><rect x="-1" y="-2.500" width="8.600" height="5" rx="2.500"/></g></svg>
<svg style="left:489.5px;top:100.5px;" width="34" height="34" viewBox="0 0 34 34"><rect x="6" y="12.200" width="17.500" height="16.600" fill="none" stroke="#d0d0d0" stroke-width="1.200" stroke-dasharray="3 2"/><rect x="5.500" y="22.200" width="8.300" height="7" fill="#d0d0d0"/><path d="M14.700 18H18V21.300" stroke="#d0d0d0" stroke-width="1.100" fill="none"/><g transform="translate(26.3,9.2) rotate(-42)" fill="none" stroke="#b3a5dc" stroke-width="1.700"><rect x="-7.600" y="-2.500" width="8.600" height="5" rx="2.500"/><rect x="-1" y="-2.500" width="8.600" height="5" rx="2.500"/></g></svg>
<svg style="left:524.5px;top:100.5px;" width="34" height="34" viewBox="0 0 34 34"><circle cx="15" cy="20.200" r="6.300" fill="none" stroke="#d0d0d0" stroke-width="1.800"/><path d="M15 10.500V29.700M5.500 20.200H24.700" stroke="#d0d0d0" stroke-width="1.500"/><g transform="translate(26.3,9.2) rotate(-42)" fill="none" stroke="#b3a5dc" stroke-width="1.700"><rect x="-7.600" y="-2.500" width="8.600" height="5" rx="2.500"/><rect x="-1" y="-2.500" width="8.600" height="5" rx="2.500"/></g></svg>
<svg style="left:559.5px;top:100.5px;" width="34" height="34" viewBox="0 0 34 34"><path d="M6.800 12.700L21 27" stroke="#d0d0d0" stroke-width="3.600" stroke-dasharray="3.600 1.800"/><path d="M17.500 30.500H24.700V23Z" fill="#d0d0d0"/><g transform="translate(26.3,9.2) rotate(-42)" fill="none" stroke="#b3a5dc" stroke-width="1.700"><rect x="-7.600" y="-2.500" width="8.600" height="5" rx="2.500"/><rect x="-1" y="-2.500" width="8.600" height="5" rx="2.500"/></g></svg>
<div style="left:601px;top:100px;width:2px;height:34px;background:#7c7c7c;"></div>
<svg style="left:606.5px;top:100.5px;" width="34" height="34" viewBox="0 0 34 34"><path d="M5.700 16.300H31.500" stroke="#d0d0d0" stroke-width="1.500"/><rect x="16" y="5.500" width="4.700" height="21.700" fill="#e27b4c"/></svg>
<svg style="left:643.4px;top:100.5px;" width="34" height="34" viewBox="0 0 34 34"><path d="M5.500 1.5H1.500V32.5H5.500M28.5 1.5H32.5V32.5H28.5" stroke="#35e035" stroke-width="2.200" fill="none"/><path d="M3.300 16.300H30" stroke="#d0d0d0" stroke-width="1.500"/><rect x="14.100" y="5.500" width="4.700" height="21.700" fill="#e27b4c"/><g transform="translate(24.4,9.2) rotate(-42)" fill="none" stroke="#d98a63" stroke-width="1.700"><rect x="-7.600" y="-2.500" width="8.600" height="5" rx="2.500"/><rect x="-1" y="-2.500" width="8.600" height="5" rx="2.500"/></g></svg>
<svg style="left:4px;top:149px;" width="36" height="4" viewBox="0 0 36 4"><rect x="0" y="0" width="1" height="1" fill="#7a7a7a"/><rect x="0" y="3" width="1" height="1" fill="#7a7a7a"/><rect x="3" y="0" width="1" height="1" fill="#7a7a7a"/><rect x="3" y="3" width="1" height="1" fill="#7a7a7a"/><rect x="6" y="0" width="1" height="1" fill="#7a7a7a"/><rect x="6" y="3" width="1" height="1" fill="#7a7a7a"/><rect x="9" y="0" width="1" height="1" fill="#7a7a7a"/><rect x="9" y="3" width="1" height="1" fill="#7a7a7a"/><rect x="12" y="0" width="1" height="1" fill="#7a7a7a"/><rect x="12" y="3" width="1" height="1" fill="#7a7a7a"/><rect x="15" y="0" width="1" height="1" fill="#7a7a7a"/><rect x="15" y="3" width="1" height="1" fill="#7a7a7a"/><rect x="18" y="0" width="1" height="1" fill="#7a7a7a"/><rect x="18" y="3" width="1" height="1" fill="#7a7a7a"/><rect x="21" y="0" width="1" height="1" fill="#7a7a7a"/><rect x="21" y="3" width="1" height="1" fill="#7a7a7a"/><rect x="24" y="0" width="1" height="1" fill="#7a7a7a"/><rect x="24" y="3" width="1" height="1" fill="#7a7a7a"/><rect x="27" y="0" width="1" height="1" fill="#7a7a7a"/><rect x="27" y="3" width="1" height="1" fill="#7a7a7a"/><rect x="30" y="0" width="1" height="1" fill="#7a7a7a"/><rect x="30" y="3" width="1" height="1" fill="#7a7a7a"/><rect x="33" y="0" width="1" height="1" fill="#7a7a7a"/><rect x="33" y="3" width="1" height="1" fill="#7a7a7a"/></svg>
<div style="left:43px;top:142px;width:1px;height:772px;background:#363636;"></div>
<div style="left:4px;top:158px;width:36px;height:36px;background:#5285a6;border-radius:2px;"></div>
<svg style="left:4px;top:158px;" width="36" height="36" viewBox="0 0 36 36"><path d="M13 5V27L18.5 22L23 31L27 29L22.500 20.500H30Z" fill="#e4e4e4" stroke="#3a3a3a" stroke-width=".8"/></svg>
<svg style="left:4px;top:195px;" width="36" height="36" viewBox="0 0 36 36"><ellipse cx="15.700" cy="14.700" rx="11.300" ry="5.600" transform="rotate(-38 15.700 14.700)" fill="none" stroke="#45b8bd" stroke-width="2.200" stroke-dasharray="4 2.300"/><path d="M18.100 11V25.500L21.700 22.300L24.300 28.300L27 27L24.400 21.300H29.500Z" fill="#dedede" stroke="#3a3a3a" stroke-width=".7"/></svg>
<svg style="left:5px;top:233px;" width="36" height="36" viewBox="0 0 36 36"><ellipse cx="13.750" cy="19.800" rx="11.300" ry="6" transform="rotate(38 13.750 19.800)" fill="none" stroke="#45b8bd" stroke-width="2.200" stroke-dasharray="4 2.300"/><path d="M29.500 4L21 12.500" stroke="#d8d8d8" stroke-width="3.200" stroke-linecap="round"/><path d="M19.500 12C17 13.500 16.500 17 12 19.500C17 22.500 22.500 19 22.500 15Z" fill="#d8d8d8"/></svg>
<svg style="left:5px;top:270px;" width="36" height="36" viewBox="0 0 36 36"><rect x="11" y="11" width="12" height="12" fill="#dcdcdc"/><path d="M17 3.500L20.600 7.300H13.400ZM17 30.500L20.600 26.700H13.400ZM3.500 17L7.300 13.400V20.600ZM30.500 17L26.700 13.400V20.600Z" fill="#45b8bd"/></svg>
<svg style="left:4px;top:306px;" width="36" height="36" viewBox="0 0 36 36"><path d="M29.900 18A13 13 0 1 0 14.600 30.800" fill="none" stroke="#45b8bd" stroke-width="1.700"/><path d="M27 17H33L30 21.800Z" fill="#45b8bd"/><path d="M17 10L25.400 18L17 26L8.600 18Z" fill="#dcdcdc"/></svg>
<svg style="left:4px;top:342px;" width="36" height="36" viewBox="0 0 36 36"><rect x="6.800" y="6.800" width="23.700" height="23.200" fill="none" stroke="#45b8bd" stroke-width="1.200" stroke-dasharray="3.500 2.300"/><rect x="6.300" y="20.500" width="10.300" height="10.300" fill="#dcdcdc"/><path d="M14.750 16.750H20.900V22.400" fill="none" stroke="#45b8bd" stroke-width="1.200"/></svg>
<div style="left:4px;top:421px;width:36px;height:2px;background:#8a8a8a;"></div>
<svg style="left:8px;top:432px;" width="28" height="28" viewBox="0 0 28 28"><rect x="0" y="0" width="28" height="28" fill="#c6c6c6"/><rect x="2.500" y="2.500" width="23" height="23" fill="none" stroke="#3a3a3a" stroke-width="1"/><path d="M9.5 9.5L14 6.7L18.5 9.5L14 12.3Z" fill="#3a3a3a"/><path d="M4.0 14L8.5 11.2L13.0 14L8.5 16.8Z" fill="#3a3a3a"/><path d="M15.0 14L19.5 11.2L24.0 14L19.5 16.8Z" fill="#3a3a3a"/><path d="M9.5 18.5L14 15.7L18.5 18.5L14 21.3Z" fill="#3a3a3a"/></svg>
<svg style="left:8px;top:469px;" width="28" height="28" viewBox="0 0 28 28"><rect x="0.5" y="0.5" width="12" height="12" fill="#3a3a3a" stroke="#c6c6c6" stroke-width="1"/><path d="M6.5 3V10M3 6.5H10" stroke="#c6c6c6" stroke-width="1"/><rect x="15" y="0" width="13" height="13" fill="#c6c6c6"/><path d="M17.5 6.5L21.5 4.1L25.5 6.5L21.5 8.9Z" fill="#3a3a3a"/><rect x="0.5" y="15.5" width="12" height="12" fill="#3a3a3a" stroke="#c6c6c6" stroke-width="1"/><path d="M6.5 18V25M3 21.5H10" stroke="#c6c6c6" stroke-width="1"/><rect x="15.5" y="15.5" width="12" height="12" fill="#3a3a3a" stroke="#c6c6c6" stroke-width="1"/><path d="M21.5 18V25M18 21.5H25" stroke="#c6c6c6" stroke-width="1"/></svg>
<svg style="left:8px;top:506px;" width="28" height="28" viewBox="0 0 28 28"><rect x=".5" y=".5" width="12" height="27" fill="#3a3a3a" stroke="#c6c6c6"/><path d="M3.500 9H9.500" stroke="#c6c6c6" stroke-width="1"/><path d="M4 12.500H10M4 15H10M4 17.500H10M4 20H10" stroke="#c6c6c6" stroke-width=".9"/><rect x="15" y="0" width="13" height="28" fill="#c6c6c6"/><path d="M17.5 14L21.5 11.6L25.5 14L21.5 16.4Z" fill="#3a3a3a"/></svg>
<svg style="left:8px;top:543px;" width="28" height="28" viewBox="0 0 28 28"><rect x="0" y="0" width="28" height="13" fill="#c6c6c6"/><path d="M10 6.5L14 4.1L18 6.5L14 8.9Z" fill="#3a3a3a"/><rect x=".5" y="15.5" width="27" height="12" fill="#3a3a3a" stroke="#c6c6c6"/><path d="M3 18.5H5M3 21.5H5M3 24.5H5" stroke="#c6c6c6"/><path d="M7 24.5C10 16 14 16 17 22C19 26 22 25 26 19" stroke="#45b8bd" stroke-width="1.100" fill="none"/><path d="M12.500 18.5V25.5M9 22H16" stroke="#c6c6c6" stroke-width="1"/></svg>
<svg style="left:8px;top:580px;" width="28" height="28" viewBox="0 0 28 28"><rect x=".5" y=".5" width="12" height="27" fill="#3a3a3a" stroke="#c6c6c6"/><g fill="none" stroke="#c6c6c6" stroke-width=".9"><rect x="3.500" y="3.500" width="2.500" height="2.500"/><rect x="7.500" y="3.500" width="2.500" height="2.500"/><rect x="3.500" y="7.500" width="2.500" height="2.500"/><rect x="7.500" y="7.500" width="2.500" height="2.500"/><rect x="3.500" y="11.500" width="2.500" height="2.500"/><rect x="7.500" y="11.500" width="2.500" height="2.500"/><rect x="4.500" y="17.500" width="4" height="3.500"/><path d="M3.500 24H9.500"/></g><rect x="15" y="0" width="13" height="28" fill="#c6c6c6"/><path d="M17.5 14L21.5 11.6L25.5 14L21.5 16.4Z" fill="#3a3a3a"/></svg>
<svg style="left:8px;top:617px;" width="28" height="28" viewBox="0 0 28 28"><rect x="0" y="0" width="13" height="13" fill="#c6c6c6"/><path d="M2.5 6.5L6.5 4.1L10.5 6.5L6.5 8.9Z" fill="#3a3a3a"/><rect x="15.500" y=".5" width="12" height="12" fill="#3a3a3a" stroke="#c6c6c6"/><rect x="18" y="3" width="5" height="2.500" fill="none" stroke="#45b8bd" stroke-width=".9"/><rect x="20.500" y="7.500" width="5" height="2.500" fill="none" stroke="#c6c6c6" stroke-width=".9"/><rect x=".5" y="15.5" width="27" height="12" fill="#3a3a3a" stroke="#c6c6c6"/><path d="M3 18.5H5M3 21.5H5M3 24.5H5" stroke="#c6c6c6"/><path d="M7 24.5C10 16 14 16 17 22C19 26 22 25 26 19" stroke="#45b8bd" stroke-width="1.100" fill="none"/><path d="M12.500 18.5V25.5M9 22H16" stroke="#c6c6c6" stroke-width="1"/></svg>
<div style="left:6px;top:651px;width:30px;height:30px;background:#3f3f3f;border:1px solid #333;border-radius:2px;"></div>
<svg style="left:18px;top:664px;" width="6" height="4" viewBox="0 0 6 4"><path d="M0 0H6L3 3.500Z" fill="#d0d0d0"/></svg>
<svg style="left:5px;top:879px;" width="34" height="30" viewBox="0 0 34 30"><path d="M7.100 10.900L15.500 1.500L27 10.900V17L17 22L7.100 17Z" fill="#0e7b82"/>
<path d="M7.100 10.900L15.500 3L12.300 18Z" fill="#138a90"/><path d="M15.500 1.500L20.500 15.500L17 21L12.500 15.500Z" fill="#1fa3a8"/><path d="M27 10.900L15.500 3L21 18Z" fill="#0c6c73"/>
<path d="M0.600 10.400L15.500 0.500V4L7.100 10.900Z" fill="#23b0b3"/><path d="M33 10.400L15.500 0.500V4L27 10.900Z" fill="#1b969a"/>
<path d="M0.600 10.400L7.100 10.900V29L0.600 28.600Z" fill="#2fd2d1"/><path d="M27 10.900L33 10.400V28.600L27 28.600Z" fill="#1a9ea2"/>
<path d="M7.100 10.900L10.600 18.200L9.300 22.500L7.100 20Z" fill="#1fb3b6"/><path d="M27 10.900L23.500 18.200L24.400 22.500L27 20Z" fill="#15888d"/>
<path d="M10.600 18.200L17 22.500L23.500 18.200L24.400 22.500L17 29L9.300 22.500Z" fill="#2ac2c4"/><path d="M17 22.500L23.500 18.200L24.400 22.500L17 29Z" fill="#22adb0"/></svg>
<div style="left:45px;top:143px;width:1472px;height:770px;background:#444;border:1px solid #7e7e7e;"></div>
<span class="t" style="left:54px;top:147.04px;font-size:11px;color:#d2d2d2;">View</span>
<span class="t" style="left:94px;top:147.04px;font-size:11px;color:#d2d2d2;">Shading</span>
<span class="t" style="left:151.5px;top:147.04px;font-size:11px;color:#d2d2d2;">Lighting</span>
<span class="t" style="left:209.5px;top:147.04px;font-size:11px;color:#d2d2d2;">Show</span>
<span class="t" style="left:253.5px;top:147.04px;font-size:11px;color:#d2d2d2;">Renderer</span>
<span class="t" style="left:315.5px;top:147.04px;font-size:11px;color:#d2d2d2;">Panels</span>
<div style="left:46px;top:183px;width:1470px;height:729px;background:#5e5e5e;"></div>
<span class="t" style="left:760px;top:894.45px;font-size:10px;color:#f0f0f0;font-weight:bold;">persp</span>
<svg style="left:55px;top:862px;" width="36" height="36" viewBox="0 0 36 36"><path d="M16.400 24V11.800" stroke="#2fd02f" stroke-width="1.300"/><path d="M16.400 24L22.500 27" stroke="#d43030" stroke-width="1.300"/><path d="M16.400 24L9.200 27.800" stroke="#1a1ac8" stroke-width="1.300"/>
<text x="13.600" y="10" font-size="10" font-weight="bold" fill="#2fd02f" font-family="Liberation Sans, sans-serif">y</text><text x="24" y="28.600" font-size="9" font-weight="bold" fill="#d43030" font-family="Liberation Sans, sans-serif">x</text><text x="3" y="28" font-size="9" font-weight="bold" fill="#1a1ac8" font-family="Liberation Sans, sans-serif">z</text></svg>
<svg style="left:0;top:0" width="1920" height="1040" viewBox="0 0 1920 1040">
<!-- left caster block -->
<path d="M640.500 618L640.700 622.400L641.500 652.700L665.700 670.800L690 668.200L699.500 661L690 640Z" fill="#060606"/>
<path d="M667 643.500L670.500 646.500L669.500 647.500Z" fill="#8a8a8a"/>
<!-- right caster -->
<path d="M903 640L936 633L937.300 637.200L934.700 655.400L922.600 669.200L903.600 666.600L899.300 650.200Z" fill="#090909"/>
<path d="M912 650L914 659L917 664L923.500 662.500L933 652L932.500 638L930.500 640L930.500 650L922 659L917 656L914.500 649Z" fill="#9c9c9c"/>
<!-- ground sliver -->
<path d="M738.400 685.500L786 702L781.700 709.800Z" fill="#6e6e6e"/>
<!-- left slanted side -->
<path d="M547.500 481L676 541L776.500 703.200L699.500 661L641.500 618Z" fill="#050505"/>
<!-- front/right body -->
<path d="M676 538L980.500 400L962 560L960.500 563L954 565.500L946 629.500L936 634.500L868 662L785 703.500L774 700Z" fill="#0e0e0e"/>
<path d="M676 541L690 536L779 700L775 701Z" fill="#111111"/>
<path d="M700 552C706 590 718 612 734 622" fill="none" stroke="#080808" stroke-width="1.500"/>
<path d="M908 480L911 585" fill="none" stroke="#090909" stroke-width="1.200"/>
<!-- interior + rim -->
<path d="M496 447L534.500 430L584 408L636 384.500L688 359L739.500 340.500L780 328.500L832 311L926 339L929 337.500L952 343L962 351L1015.500 368L1015.500 378L1014 392.500L980.500 404L676 541.500L672 541.500L547.500 481L497 457.500Z" fill="#131313"/>
<path d="M530 443L590 416L640 393L690 368L740 350L782 337.500L829 322L996 371L690 518Z" fill="#0e0e0e"/>
<path d="M829 322L824 420L690 518L530 443Z" fill="#0f0f0f"/>
<path d="M829 322L996 371L955 392L824 425Z" fill="#0d0d0d"/>
<path d="M1015.500 378L1014 392.500L980.500 404L981 392Z" fill="#0a0a0a"/>
<!-- big wheel -->
<path d="M825.700 650.200L846.500 648.400L858.600 655.400L870.700 668.300L869.900 698.600L859.500 723.700L834.400 750.500L810.200 755.700L795.500 745.300L785.100 734.100L785.100 703.800L797.200 679.600L810.200 658.800Z" fill="#090909"/>
<ellipse cx="830" cy="703" rx="21" ry="30" transform="rotate(24 830 703)" fill="#0f0f0f"/>
<path d="M831 681.300L836.100 677L833.500 686.500Z" fill="#8a8a8a"/>
<path d="M829.200 702L836 697L843 693.500L844 697L838 702L836 710.700L831 710.700Z" fill="#808080"/>
<path d="M811.900 724.600L818.800 716L815.400 726.300Z" fill="#8a8a8a"/>
</svg>
<div style="left:49px;top:163.5px;width:1px;height:17px;background:#868686;"></div><div style="left:48px;top:167.5px;width:3px;height:9px;background:#868686;"></div>
<svg style="left:57.0px;top:162.5px;" width="18" height="18" viewBox="0 0 18 18"><rect x="1.500" y="5" width="10" height="8" fill="#d6d6d6"/><path d="M12 9L16.500 5V13Z" fill="#d6d6d6"/></svg>
<svg style="left:77.0px;top:162.5px;" width="18" height="18" viewBox="0 0 18 18"><rect x="4" y="4" width="7" height="6" fill="#d6d6d6"/><path d="M11.500 7.500L16 3.500V11.500Z" fill="#d6d6d6"/><circle cx="5.500" cy="11.500" r="2.300" fill="#444" stroke="#4fc3cf" stroke-width="1.800"/><circle cx="5.500" cy="11.500" r="3.700" fill="none" stroke="#4fc3cf" stroke-width="1.300" stroke-dasharray="1.400 1.500"/></svg>
<svg style="left:97.0px;top:162.5px;" width="18" height="18" viewBox="0 0 18 18"><path d="M5.500 3.500H12.500V14.500L9 11L5.500 14.500Z" fill="#d6d6d6"/></svg>
<svg style="left:116.5px;top:162.5px;" width="18" height="18" viewBox="0 0 18 18"><path d="M8 11.500L13 2.500V11.500Z" fill="#4fc3cf"/><path d="M8 11.500L11 5V11.500Z" fill="#3aa4b0"/><path d="M5 12.500H16L13.500 16H2.500Z" fill="none" stroke="#d6d6d6" stroke-width="1.100"/><path d="M2.500 16L7 8.500" stroke="#d6d6d6" stroke-width="1.100"/><path d="M9 14.200H12.500" stroke="#d6d6d6" stroke-width="1"/></svg>
<svg style="left:137.5px;top:162.5px;" width="18" height="18" viewBox="0 0 18 18"><path d="M8 2V11M3 7.500H10" stroke="#d6d6d6" stroke-width="1.300"/><path d="M6 4L8 1.500L10 4ZM4.500 5.500L2 7.500L4.500 9.500Z" fill="#d6d6d6"/><circle cx="12.500" cy="9.500" r="2.800" fill="none" stroke="#4fc3cf" stroke-width="1.500"/><path d="M10.500 11.500L6.500 15.500" stroke="#4fc3cf" stroke-width="2"/></svg>
<svg style="left:157.0px;top:162.5px;" width="18" height="18" viewBox="0 0 18 18"><path d="M13.500 3L15.500 5L7 13.500L4.500 14.200L5 11.500Z" fill="#d6d6d6"/><path d="M4.500 14.200L3.500 15.500" stroke="#4fc3cf" stroke-width="1.800"/><path d="M10 15.500C12 16.500 14.500 15.500 14.500 13.500" fill="none" stroke="#d6d6d6" stroke-width="1"/></svg>
<div style="left:180px;top:163.5px;width:1px;height:17px;background:#868686;"></div><div style="left:179px;top:167.5px;width:3px;height:9px;background:#868686;"></div>
<div style="left:188px;top:163px;width:19px;height:19px;background:#5285a6;border-radius:2px;"></div>
<svg style="left:188.5px;top:162.5px;" width="18" height="18" viewBox="0 0 18 18"><rect x="3.400" y="4.300" width="10.400" height="10.400" fill="#f2f2f2"/><path d="M6.900 4.300V14.700M10.300 4.300V14.700M3.400 7.800H13.800M3.400 11.200H13.800" stroke="#2a4a5e" stroke-width=".7"/><rect x="3.400" y="4.300" width="10.400" height="10.400" fill="none" stroke="#2a4a5e" stroke-width=".6"/></svg>
<svg style="left:208.0px;top:162.5px;" width="18" height="18" viewBox="0 0 18 18"><rect x="2.200" y="3.600" width="13.700" height="11.200" fill="#383838" stroke="#d6d6d6" stroke-width="1.200"/><path d="M2.200 6H16M2.200 12.400H16" stroke="#d6d6d6" stroke-width="1"/><path d="M4.500 3.600V6M7.300 3.600V6M10.100 3.600V6M12.900 3.600V6M4.500 12.400V14.800M7.300 12.400V14.800M10.100 12.400V14.800M12.900 12.400V14.800" stroke="#d6d6d6" stroke-width="1.100"/></svg>
<svg style="left:228.0px;top:162.5px;" width="18" height="18" viewBox="0 0 18 18"><rect x="2.200" y="3.500" width="14" height="11.300" fill="#383838" stroke="#d6d6d6" stroke-width="1.200"/><circle cx="9.200" cy="9.200" r="2.900" fill="#4fc3cf"/></svg>
<div style="left:249px;top:163.5px;width:17.5px;height:17.5px;background:#4b4b4b;border:1px solid #2a2a2a;border-radius:3px;"></div>
<svg style="left:248.5px;top:162.5px;" width="18" height="18" viewBox="0 0 18 18"><circle cx="9.200" cy="9.600" r="3.600" fill="#3a3a3a"/></svg>
<svg style="left:268.0px;top:162.5px;" width="18" height="18" viewBox="0 0 18 18"><rect x="2.200" y="3.500" width="14" height="11.300" fill="#383838" stroke="#d6d6d6" stroke-width="1.200"/><path d="M3.500 9.200H15M9.200 4.500V14" stroke="#4fc3cf" stroke-width="1" stroke-dasharray="1.600 1"/><path d="M6.500 7.500V11M12 7.500V11" stroke="#4fc3cf" stroke-width=".9"/></svg>
<svg style="left:288.0px;top:162.5px;" width="18" height="18" viewBox="0 0 18 18"><rect x="2.200" y="3.500" width="14" height="11.300" fill="#383838" stroke="#d6d6d6" stroke-width="1.200"/><path d="M5 12.500L8 8.500L10.500 12.500Z" fill="#4fc3cf"/><circle cx="11.800" cy="7.600" r="1.700" fill="#4fc3cf"/></svg>
<svg style="left:308.0px;top:162.5px;" width="18" height="18" viewBox="0 0 18 18"><rect x="2.200" y="3.500" width="14" height="11.300" fill="#383838" stroke="#d6d6d6" stroke-width="1.200"/><path d="M5.700 6.300H12.700V8.300H10.300V12.800H8.100V8.300H5.700Z" fill="#4fc3cf"/></svg>
<div style="left:331px;top:163.5px;width:1px;height:17px;background:#868686;"></div><div style="left:330px;top:167.5px;width:3px;height:9px;background:#868686;"></div>
<svg style="left:339.0px;top:162.5px;" width="18" height="18" viewBox="0 0 18 18"><path d="M9 2L15.500 5.500V12.500L9 16L2.500 12.500V5.500Z" fill="none" stroke="#4fc3cf" stroke-width="1.200"/><path d="M2.500 5.500L9 9L15.500 5.500M9 9V16" fill="none" stroke="#4fc3cf" stroke-width="1.200"/></svg>
<div style="left:359px;top:163px;width:19px;height:19px;background:#5285a6;border-radius:2px;"></div>
<svg style="left:359.5px;top:162.5px;" width="18" height="18" viewBox="0 0 18 18"><path d="M9 2L15.500 5.500L9 9L2.500 5.500Z" fill="#f2f2f2"/><path d="M2.500 5.500L9 9V16L2.500 12.500Z" fill="#9a9a9a"/><path d="M15.500 5.500L9 9V16L15.500 12.500Z" fill="#c9c9c9"/><path d="M9 2L15.500 5.500V12.500L9 16L2.500 12.500V5.500Z" fill="none" stroke="#555" stroke-width=".6"/></svg>
<svg style="left:379.0px;top:162.5px;" width="18" height="18" viewBox="0 0 18 18"><path d="M9 2.500A6.500 6.500 0 0 0 9 15.500Z" fill="#e8e8e8"/><g fill="#e8e8e8"><rect x="9" y="3" width="2.500" height="2.500"/><rect x="11.500" y="5.500" width="2.500" height="2.500"/><rect x="9" y="8" width="2.500" height="2.500"/><rect x="11.500" y="10.500" width="2.500" height="2.500"/><rect x="9" y="13" width="2.500" height="2"/><rect x="14" y="8" width="1.500" height="2.500"/></g></svg>
<svg style="left:399.0px;top:162.5px;" width="18" height="18" viewBox="0 0 18 18"><path d="M9 2L15.500 5.500V12.500L9 16L2.500 12.500V5.500Z" fill="#3a3a3a" stroke="#4fc3cf" stroke-width="1.200"/><path d="M2.500 5.500L9 9L15.500 5.500M9 9V16" fill="none" stroke="#4fc3cf" stroke-width="1.100"/><path d="M9 5.700L12.300 7.500V11.200L9 13L5.700 11.200V7.500Z" fill="#4fc3cf" opacity=".55"/><path d="M9 5.700L12.300 7.500V11.200L9 13L5.700 11.200V7.500ZM5.700 7.500L9 9.300L12.300 7.500M9 9.300V13" fill="none" stroke="#4fc3cf" stroke-width=".9"/></svg>
<div style="left:419px;top:163px;width:19px;height:19px;background:#5285a6;border-radius:2px;"></div>
<svg style="left:419.5px;top:162.5px;" width="18" height="18" viewBox="0 0 18 18"><circle cx="9" cy="9" r="7" fill="#f2f2f2"/><g fill="#333"><path d="M9 2A7 7 0 0 1 12.500 3L11.500 5.500H9Z"/><rect x="5.500" y="5.500" width="3.500" height="3.500"/><rect x="12.500" y="5.500" width="3" height="3.500"/><rect x="2" y="9" width="3.500" height="3.500"/><rect x="9" y="9" width="3.500" height="3.500"/><rect x="5.500" y="12.500" width="3.500" height="3"/><path d="M12.500 12.500H14.800L12.500 15Z"/><path d="M3 5.500H5.500V3.200Z"/></g><circle cx="9" cy="9" r="7" fill="none" stroke="#444" stroke-width=".6"/></svg>
<svg style="left:439.0px;top:162.5px;" width="18" height="18" viewBox="0 0 18 18"><path d="M6.500 10.500C4.500 8.500 5.500 4.500 9 4.500C12.500 4.500 13.500 8.500 11.500 10.500V12.500H6.500Z" fill="#f0f0f0"/><rect x="7" y="13.200" width="4" height="1.600" fill="#bdbdbd"/><path d="M9 1V2.800M3.500 3.500L4.800 4.800M14.500 3.500L13.200 4.800M1.500 8.500H3.300M14.700 8.500H16.500" stroke="#4fc3cf" stroke-width="1.100"/></svg>
<svg style="left:459.0px;top:162.5px;" width="18" height="18" viewBox="0 0 18 18"><path d="M2 12.500L7.500 9M3 14.500L8.500 11M4.500 16L9.500 13" stroke="#b8b8b8" stroke-width="1" fill="none"/><circle cx="11.800" cy="8.300" r="4.600" fill="#4fc3cf"/></svg>
<div style="left:482px;top:163.5px;width:1px;height:17px;background:#868686;"></div><div style="left:481px;top:167.5px;width:3px;height:9px;background:#868686;"></div>
<svg style="left:490.0px;top:162.5px;" width="18" height="18" viewBox="0 0 18 18"><path d="M3 12L9 15.500L15 12M3 13.800L9 17.300L15 13.800M5 10.800L9 13.200L13 10.800" stroke="#4fc3cf" stroke-width=".9" fill="none"/><circle cx="9" cy="7.300" r="4.800" fill="#cfcfcf"/><path d="M4.300 8.300C6 11 12 11 13.700 8.300C13.500 11 11.500 12.100 9 12.100C6.500 12.100 4.500 11 4.300 8.300Z" fill="#8c8c8c"/></svg>
<svg style="left:510.0px;top:162.5px;" width="18" height="18" viewBox="0 0 18 18"><circle cx="11" cy="9" r="4.800" fill="#e4e4e4"/><path d="M6 5A5 5 0 0 0 6 13M3.500 5.500A4.500 4.500 0 0 0 3.500 12.500" stroke="#cfcfcf" stroke-width="1.300" fill="none"/></svg>
<svg style="left:530.0px;top:162.5px;" width="18" height="18" viewBox="0 0 18 18"><circle cx="9" cy="9" r="5.500" fill="none" stroke="#e0e0e0" stroke-width="2" stroke-dasharray="2.500 2"/><path d="M9 3.500A5.500 5.500 0 0 1 9 14.500" fill="none" stroke="#4fc3cf" stroke-width="2"/></svg>
<div style="left:550px;top:163.5px;width:18.5px;height:17.5px;background:#4b4b4b;border:1px solid #2a2a2a;border-radius:3px;"></div>
<svg style="left:550.5px;top:162.5px;" width="18" height="18" viewBox="0 0 18 18"><rect x="4" y="6" width="8" height="8" fill="#3f5b60"/><path d="M8 4H14V10" stroke="#4c4c4c" fill="none" stroke-dasharray="1.500 1"/></svg>
<div style="left:573px;top:163.5px;width:1px;height:17px;background:#868686;"></div><div style="left:572px;top:167.5px;width:3px;height:9px;background:#868686;"></div>
<svg style="left:581.0px;top:162.5px;" width="18" height="18" viewBox="0 0 18 18"><rect x="3" y="3.500" width="9" height="8.500" fill="none" stroke="#4fc3cf" stroke-width="1.300" stroke-dasharray="2.600 1.600"/><path d="M9 6.500V16L11.500 14L13.200 17.500L15 16.600L13.300 13.200H16Z" fill="#e6e6e6" stroke="#333" stroke-width=".5"/></svg>
<div style="left:604px;top:163.5px;width:1px;height:17px;background:#868686;"></div><div style="left:603px;top:167.5px;width:3px;height:9px;background:#868686;"></div>
<svg style="left:612.0px;top:162.5px;" width="18" height="18" viewBox="0 0 18 18"><rect x="6.500" y="3" width="8.500" height="8.500" fill="#e0e0e0"/><rect x="3" y="6.500" width="8.500" height="8.500" fill="#e0e0e0" stroke="#444" stroke-width="1.200"/></svg>
<svg style="left:632.0px;top:162.5px;" width="18" height="18" viewBox="0 0 18 18"><rect x="6.500" y="3" width="8.500" height="8.500" fill="none" stroke="#e0e0e0" stroke-width="1.200"/><rect x="9" y="5.500" width="3.500" height="3.500" fill="#e0e0e0"/><rect x="3" y="6.500" width="8.500" height="8.500" fill="#4fc3cf" stroke="#444" stroke-width="1"/></svg>
<svg style="left:652.0px;top:162.5px;" width="18" height="18" viewBox="0 0 18 18"><rect x="3" y="3.500" width="12" height="11" fill="none" stroke="#e0e0e0" stroke-width="1.200"/><circle cx="6.500" cy="7" r="1.600" fill="#4fc3cf"/><path d="M7.500 8L12 12" stroke="#4fc3cf" stroke-width="1.200"/><circle cx="12" cy="12" r="1.300" fill="#4fc3cf"/></svg>
<div style="left:675px;top:163.5px;width:1px;height:17px;background:#868686;"></div><div style="left:674px;top:167.5px;width:3px;height:9px;background:#868686;"></div>
<svg style="left:683.5px;top:163px;" width="20" height="19" viewBox="0 0 20 19"><path d="M4 1H1V18H4M16 1H19V18H16" stroke="#35e035" stroke-width="1.800" fill="none"/><circle cx="10" cy="9.500" r="6" fill="#dcdcdc"/><path d="M10 9.500L6 5M10 9.500L15.500 7M10 9.500L13.500 14.500M10 9.500L5 13.500M10 9.500L10.500 3.500M10 9.500L4 9.500" stroke="#444" stroke-width="1.100"/><circle cx="10" cy="9.500" r="2" fill="#444"/></svg>
<div style="left:705.5px;top:164.5px;width:37.5px;height:14px;background:#2b2b2b;border-radius:2px;"></div>
<span class="t" style="left:710px;top:166.68px;font-size:10.3px;color:#e0e0e0;">0.00</span>
<svg style="left:745.5px;top:163px;" width="20" height="19" viewBox="0 0 20 19"><path d="M4 1H1V18H4M16 1H19V18H16" stroke="#35e035" stroke-width="1.800" fill="none"/><rect x="4.500" y="4" width="11" height="11" fill="#3a3a3a"/><path d="M10 4.500A5 5 0 0 0 10 14.500Z" fill="#dcdcdc"/><path d="M10 4.500A5 5 0 0 1 10 14.500Z" fill="#8a8a8a"/></svg>
<div style="left:767.5px;top:164.5px;width:37.5px;height:14px;background:#2b2b2b;border-radius:2px;"></div>
<span class="t" style="left:772.5px;top:166.68px;font-size:10.3px;color:#e0e0e0;">1.00</span>
<div style="left:807.5px;top:163px;width:19.5px;height:19px;background:#5285a6;border-radius:2px;"></div>
<svg style="left:808.5px;top:164px;" width="17.5" height="17" viewBox="0 0 17.5 17"><circle cx="8.750" cy="8.500" r="7" fill="none" stroke="#63cbd6" stroke-width="1.300"/><text x="8.750" y="11" text-anchor="middle" font-size="6.200" font-weight="bold" fill="#63cbd6" font-family="Liberation Sans, sans-serif">ON</text></svg>
<div style="left:830px;top:163px;width:138px;height:17.5px;background:#5d5d5d;border-radius:2px;"></div>
<div style="left:947px;top:164px;width:1px;height:15.5px;background:#505050;"></div>
<span class="t" style="left:833.5px;top:166.59px;font-size:10.4px;color:#e8e8e8;">sRGB gamma</span>
<svg style="left:953px;top:169px;" width="10" height="6" viewBox="0 0 10 6"><path d="M0 0H10L5 5.500Z" fill="#d6d6d6"/></svg>
<div style="left:1518px;top:142px;width:1px;height:772px;background:#333333;"></div>
<svg style="left:1528px;top:150px;" width="102" height="4" viewBox="0 0 102 4"><rect x="0" y="0" width="1" height="1" fill="#777"/><rect x="0" y="3" width="1" height="1" fill="#777"/><rect x="3" y="0" width="1" height="1" fill="#777"/><rect x="3" y="3" width="1" height="1" fill="#777"/><rect x="6" y="0" width="1" height="1" fill="#777"/><rect x="6" y="3" width="1" height="1" fill="#777"/><rect x="9" y="0" width="1" height="1" fill="#777"/><rect x="9" y="3" width="1" height="1" fill="#777"/><rect x="12" y="0" width="1" height="1" fill="#777"/><rect x="12" y="3" width="1" height="1" fill="#777"/><rect x="15" y="0" width="1" height="1" fill="#777"/><rect x="15" y="3" width="1" height="1" fill="#777"/><rect x="18" y="0" width="1" height="1" fill="#777"/><rect x="18" y="3" width="1" height="1" fill="#777"/><rect x="21" y="0" width="1" height="1" fill="#777"/><rect x="21" y="3" width="1" height="1" fill="#777"/><rect x="24" y="0" width="1" height="1" fill="#777"/><rect x="24" y="3" width="1" height="1" fill="#777"/><rect x="27" y="0" width="1" height="1" fill="#777"/><rect x="27" y="3" width="1" height="1" fill="#777"/><rect x="30" y="0" width="1" height="1" fill="#777"/><rect x="30" y="3" width="1" height="1" fill="#777"/><rect x="33" y="0" width="1" height="1" fill="#777"/><rect x="33" y="3" width="1" height="1" fill="#777"/><rect x="36" y="0" width="1" height="1" fill="#777"/><rect x="36" y="3" width="1" height="1" fill="#777"/><rect x="39" y="0" width="1" height="1" fill="#777"/><rect x="39" y="3" width="1" height="1" fill="#777"/><rect x="42" y="0" width="1" height="1" fill="#777"/><rect x="42" y="3" width="1" height="1" fill="#777"/><rect x="45" y="0" width="1" height="1" fill="#777"/><rect x="45" y="3" width="1" height="1" fill="#777"/><rect x="48" y="0" width="1" height="1" fill="#777"/><rect x="48" y="3" width="1" height="1" fill="#777"/><rect x="51" y="0" width="1" height="1" fill="#777"/><rect x="51" y="3" width="1" height="1" fill="#777"/><rect x="54" y="0" width="1" height="1" fill="#777"/><rect x="54" y="3" width="1" height="1" fill="#777"/><rect x="57" y="0" width="1" height="1" fill="#777"/><rect x="57" y="3" width="1" height="1" fill="#777"/><rect x="60" y="0" width="1" height="1" fill="#777"/><rect x="60" y="3" width="1" height="1" fill="#777"/><rect x="63" y="0" width="1" height="1" fill="#777"/><rect x="63" y="3" width="1" height="1" fill="#777"/><rect x="66" y="0" width="1" height="1" fill="#777"/><rect x="66" y="3" width="1" height="1" fill="#777"/><rect x="69" y="0" width="1" height="1" fill="#777"/><rect x="69" y="3" width="1" height="1" fill="#777"/><rect x="72" y="0" width="1" height="1" fill="#777"/><rect x="72" y="3" width="1" height="1" fill="#777"/><rect x="75" y="0" width="1" height="1" fill="#777"/><rect x="75" y="3" width="1" height="1" fill="#777"/><rect x="78" y="0" width="1" height="1" fill="#777"/><rect x="78" y="3" width="1" height="1" fill="#777"/><rect x="81" y="0" width="1" height="1" fill="#777"/><rect x="81" y="3" width="1" height="1" fill="#777"/><rect x="84" y="0" width="1" height="1" fill="#777"/><rect x="84" y="3" width="1" height="1" fill="#777"/><rect x="87" y="0" width="1" height="1" fill="#777"/><rect x="87" y="3" width="1" height="1" fill="#777"/><rect x="90" y="0" width="1" height="1" fill="#777"/><rect x="90" y="3" width="1" height="1" fill="#777"/><rect x="93" y="0" width="1" height="1" fill="#777"/><rect x="93" y="3" width="1" height="1" fill="#777"/><rect x="96" y="0" width="1" height="1" fill="#777"/><rect x="96" y="3" width="1" height="1" fill="#777"/><rect x="99" y="0" width="1" height="1" fill="#777"/><rect x="99" y="3" width="1" height="1" fill="#777"/></svg>
<svg style="left:1768px;top:150px;" width="99" height="4" viewBox="0 0 99 4"><rect x="0" y="0" width="1" height="1" fill="#777"/><rect x="0" y="3" width="1" height="1" fill="#777"/><rect x="3" y="0" width="1" height="1" fill="#777"/><rect x="3" y="3" width="1" height="1" fill="#777"/><rect x="6" y="0" width="1" height="1" fill="#777"/><rect x="6" y="3" width="1" height="1" fill="#777"/><rect x="9" y="0" width="1" height="1" fill="#777"/><rect x="9" y="3" width="1" height="1" fill="#777"/><rect x="12" y="0" width="1" height="1" fill="#777"/><rect x="12" y="3" width="1" height="1" fill="#777"/><rect x="15" y="0" width="1" height="1" fill="#777"/><rect x="15" y="3" width="1" height="1" fill="#777"/><rect x="18" y="0" width="1" height="1" fill="#777"/><rect x="18" y="3" width="1" height="1" fill="#777"/><rect x="21" y="0" width="1" height="1" fill="#777"/><rect x="21" y="3" width="1" height="1" fill="#777"/><rect x="24" y="0" width="1" height="1" fill="#777"/><rect x="24" y="3" width="1" height="1" fill="#777"/><rect x="27" y="0" width="1" height="1" fill="#777"/><rect x="27" y="3" width="1" height="1" fill="#777"/><rect x="30" y="0" width="1" height="1" fill="#777"/><rect x="30" y="3" width="1" height="1" fill="#777"/><rect x="33" y="0" width="1" height="1" fill="#777"/><rect x="33" y="3" width="1" height="1" fill="#777"/><rect x="36" y="0" width="1" height="1" fill="#777"/><rect x="36" y="3" width="1" height="1" fill="#777"/><rect x="39" y="0" width="1" height="1" fill="#777"/><rect x="39" y="3" width="1" height="1" fill="#777"/><rect x="42" y="0" width="1" height="1" fill="#777"/><rect x="42" y="3" width="1" height="1" fill="#777"/><rect x="45" y="0" width="1" height="1" fill="#777"/><rect x="45" y="3" width="1" height="1" fill="#777"/><rect x="48" y="0" width="1" height="1" fill="#777"/><rect x="48" y="3" width="1" height="1" fill="#777"/><rect x="51" y="0" width="1" height="1" fill="#777"/><rect x="51" y="3" width="1" height="1" fill="#777"/><rect x="54" y="0" width="1" height="1" fill="#777"/><rect x="54" y="3" width="1" height="1" fill="#777"/><rect x="57" y="0" width="1" height="1" fill="#777"/><rect x="57" y="3" width="1" height="1" fill="#777"/><rect x="60" y="0" width="1" height="1" fill="#777"/><rect x="60" y="3" width="1" height="1" fill="#777"/><rect x="63" y="0" width="1" height="1" fill="#777"/><rect x="63" y="3" width="1" height="1" fill="#777"/><rect x="66" y="0" width="1" height="1" fill="#777"/><rect x="66" y="3" width="1" height="1" fill="#777"/><rect x="69" y="0" width="1" height="1" fill="#777"/><rect x="69" y="3" width="1" height="1" fill="#777"/><rect x="72" y="0" width="1" height="1" fill="#777"/><rect x="72" y="3" width="1" height="1" fill="#777"/><rect x="75" y="0" width="1" height="1" fill="#777"/><rect x="75" y="3" width="1" height="1" fill="#777"/><rect x="78" y="0" width="1" height="1" fill="#777"/><rect x="78" y="3" width="1" height="1" fill="#777"/><rect x="81" y="0" width="1" height="1" fill="#777"/><rect x="81" y="3" width="1" height="1" fill="#777"/><rect x="84" y="0" width="1" height="1" fill="#777"/><rect x="84" y="3" width="1" height="1" fill="#777"/><rect x="87" y="0" width="1" height="1" fill="#777"/><rect x="87" y="3" width="1" height="1" fill="#777"/><rect x="90" y="0" width="1" height="1" fill="#777"/><rect x="90" y="3" width="1" height="1" fill="#777"/><rect x="93" y="0" width="1" height="1" fill="#777"/><rect x="93" y="3" width="1" height="1" fill="#777"/><rect x="96" y="0" width="1" height="1" fill="#777"/><rect x="96" y="3" width="1" height="1" fill="#777"/></svg>
<span class="t" style="left:1645px;top:148.13px;font-size:8.7px;color:#d0d0d0;">Channel Box / Layer Editor</span>
<div style="left:1869.5px;top:144px;width:12.5px;height:13.5px;background:#474747;border:1px solid #2b2b2b;border-radius:3px;"></div>
<svg style="left:1872px;top:147px;" width="8" height="8" viewBox="0 0 8 8"><path d="M3.500 1H7V4.500" fill="none" stroke="#d0d0d0" stroke-width="1.200"/><rect x=".6" y="3" width="4.600" height="4.400" fill="none" stroke="#d0d0d0" stroke-width="1.200"/><path d="M.6 3.600H5.200" stroke="#d0d0d0" stroke-width="1.600"/></svg>
<div style="left:1884.8px;top:144px;width:12.5px;height:13.5px;background:#474747;border:1px solid #2b2b2b;border-radius:3px;"></div>
<svg style="left:1887px;top:146.8px;" width="8" height="8" viewBox="0 0 8 8"><path d="M.8 .8L7.200 7.200M7.200 .8L.8 7.200" stroke="#cdcdcd" stroke-width="1.900"/></svg>
<svg style="left:1837.5px;top:163px;" width="17" height="17" viewBox="0 0 17 17"><path d="M8.500 9.500V4" stroke="#3cc83c" stroke-width="1.600"/><path d="M5.800 5.500L8.500 0.500L11.200 5.500Z" fill="#3cc83c"/><path d="M8.500 9.500L3.500 10" stroke="#2838c8" stroke-width="1.600"/><path d="M4.500 7.300L-1 9.800L4.800 12.400Z" fill="#2838c8"/><path d="M8.500 9.500L12 12.500" stroke="#d23a3a" stroke-width="1.600"/><path d="M13.800 10.200L15.800 15.800L9.800 14.200Z" fill="#d23a3a"/><path d="M6.500 9.500H8.500V7.500" stroke="#d0d0d0" stroke-width="1.200" fill="none"/></svg>
<svg style="left:1859px;top:164.3px;" width="14" height="14" viewBox="0 0 14 14"><circle cx="7" cy="7" r="6.400" fill="#4b574b" stroke="#56695a" stroke-width="1"/><path d="M8 1C6.500 4 6.500 10 7 13" stroke="#45604a" stroke-width="1" fill="none"/></svg>
<svg style="left:1880px;top:164px;" width="14" height="14" viewBox="0 0 14 14"><path d="M0.600 13C7 11.500 11.500 7 13.300 0.300" stroke="#5e4444" stroke-width="1.300" fill="none"/></svg>
<span class="t" style="left:1534.5px;top:186.86px;font-size:11.2px;color:#d2d2d2;">Channels</span>
<span class="t" style="left:1597px;top:186.86px;font-size:11.2px;color:#d2d2d2;">Edit</span>
<span class="t" style="left:1632.5px;top:186.86px;font-size:11.2px;color:#d2d2d2;">Object</span>
<span class="t" style="left:1681px;top:186.86px;font-size:11.2px;color:#d2d2d2;">Show</span>
<div style="left:1527px;top:204px;width:369px;height:340px;background:#2b2b2b;"></div>
<div style="left:1526px;top:546px;width:371px;height:1px;background:#383838;"></div>
<div style="left:1526px;top:556px;width:61px;height:22px;background:#646464;border-radius:2px 2px 0 0;"></div>
<span class="t" style="left:1538px;top:560.86px;font-size:11.2px;color:#f0f0f0;">Display</span>
<div style="left:1588.5px;top:557px;width:59px;height:20px;background:#3b3b3b;border-radius:2px 2px 0 0;"></div>
<span class="t" style="left:1599px;top:561.86px;font-size:11.2px;color:#bdbdbd;">Render</span>
<div style="left:1649px;top:557px;width:48px;height:20px;background:#3b3b3b;border-radius:2px 2px 0 0;"></div>
<span class="t" style="left:1660px;top:561.86px;font-size:11.2px;color:#bdbdbd;">Anim</span>
<div style="left:1526px;top:577px;width:371px;height:335px;background:#474747;border:1px solid #3a3a3a;"></div>
<span class="t" style="left:1537px;top:583.23px;font-size:10.8px;color:#d2d2d2;">Layers</span>
<span class="t" style="left:1584px;top:583.23px;font-size:10.8px;color:#d2d2d2;letter-spacing:.25px;">Options</span>
<span class="t" style="left:1640px;top:583.23px;font-size:10.8px;color:#d2d2d2;">Help</span>
<svg style="left:1795px;top:600px;" width="100" height="20" viewBox="0 0 100 20"><path d="M4.5 11L11.2 6.6L17.9 11L11.2 15.4Z" fill="#d2d2d2"/><path d="M15.800 6.900L18.900 10.500H17.300V14.300H14.300V10.500H12.700Z" fill="#4fbccb" stroke="#2a5560" stroke-width=".5"/><path d="M27.1 10.7L33.8 6.3L40.5 10.7L33.8 15.1Z" fill="#d2d2d2"/><path d="M38.700 14.700L41.800 11H40.200V7.200H37.200V11H35.600Z" fill="#4fbccb" stroke="#2a5560" stroke-width=".5"/><path d="M54.3 10.5L61 6.1L67.7 10.5L61 14.9Z" fill="#d2d2d2"/><path d="M66.100 3.900V9.900M63.100 6.900H69.100" stroke="#2a5560" stroke-width="2.800"/><path d="M66.100 3.900V9.900M63.100 6.900H69.100" stroke="#4fbccb" stroke-width="1.900"/><path d="M78.0 10.5L84.7 6.1L91.4 10.5L84.7 14.9Z" fill="#d2d2d2"/><circle cx="88" cy="6.900" r="3.300" fill="#4fbccb" stroke="#2a5560" stroke-width=".6"/></svg>
<div style="left:1530px;top:625px;width:362px;height:283px;background:#2b2b2b;"></div>
<div style="left:1534px;top:629px;width:19px;height:14px;background:#2b2b2b;border:1px solid #1f1f1f;border-radius:2px;"></div>
<span class="t" style="left:1540px;top:630.50px;font-size:10.5px;color:#e6e6e6;">V</span>
<div style="left:1557px;top:629px;width:19px;height:14px;background:#2b2b2b;border:1px solid #1f1f1f;border-radius:2px;"></div>
<span class="t" style="left:1563.5px;top:630.50px;font-size:10.5px;color:#e6e6e6;">P</span>
<div style="left:1580px;top:629px;width:19px;height:14px;background:#2b2b2b;border:1px solid #1f1f1f;border-radius:2px;"></div>
<div style="left:1603px;top:629px;width:16px;height:14px;background:#a0082f;"></div>
<span class="t" style="left:1622px;top:630.23px;font-size:10.8px;color:#f2f2f2;">Black_Wheeled_Trash_Can</span>
<div style="left:1899px;top:300px;width:21px;height:102.5px;background:#3a3a3a;border-radius:0 0 3px 3px;"></div>
<div style="left:1899px;top:142px;width:21px;height:158px;background:#646464;border-radius:0 0 3px 3px;"></div>
<span class="t" style="left:1903px;top:155px;font-size:10.200px;color:#e8e8e8;letter-spacing:.5px;transform-origin:0 0;transform:rotate(90deg) translate(0,-100%);">Channel Box / Layer Editor</span>
<span class="t" style="left:1903px;top:312px;font-size:10.200px;color:#b8b8b8;letter-spacing:.75px;transform-origin:0 0;transform:rotate(90deg) translate(0,-100%);">Attribute Editor</span>
<div style="left:0px;top:914px;width:1920px;height:1px;background:#383838;"></div>
<svg style="left:7px;top:918.5px;" width="4" height="26" viewBox="0 0 4 26"><rect x="0" y="0" width="1" height="1" fill="#7a7a7a"/><rect x="3" y="0" width="1" height="1" fill="#7a7a7a"/><rect x="0" y="3" width="1" height="1" fill="#7a7a7a"/><rect x="3" y="3" width="1" height="1" fill="#7a7a7a"/><rect x="0" y="6" width="1" height="1" fill="#7a7a7a"/><rect x="3" y="6" width="1" height="1" fill="#7a7a7a"/><rect x="0" y="9" width="1" height="1" fill="#7a7a7a"/><rect x="3" y="9" width="1" height="1" fill="#7a7a7a"/><rect x="0" y="12" width="1" height="1" fill="#7a7a7a"/><rect x="3" y="12" width="1" height="1" fill="#7a7a7a"/><rect x="0" y="15" width="1" height="1" fill="#7a7a7a"/><rect x="3" y="15" width="1" height="1" fill="#7a7a7a"/><rect x="0" y="18" width="1" height="1" fill="#7a7a7a"/><rect x="3" y="18" width="1" height="1" fill="#7a7a7a"/><rect x="0" y="21" width="1" height="1" fill="#7a7a7a"/><rect x="3" y="21" width="1" height="1" fill="#7a7a7a"/></svg>
<div style="left:17px;top:918px;width:1628px;height:28px;background:#2b2b2b;"></div>
<div style="left:26px;top:918px;width:12px;height:28px;background:#5a5a5a;"></div>
<span class="t" style="left:27.5px;top:932.00px;font-size:10.5px;color:#f0f0f0;">1</span>
<div style="left:79px;top:931px;width:2px;height:15px;background:#a6a6a6;"></div>
<span class="t" style="left:82px;top:917.65px;font-size:10px;color:#9c9c9c;">5</span>
<div style="left:146px;top:931px;width:2px;height:15px;background:#a6a6a6;"></div>
<span class="t" style="left:149px;top:917.65px;font-size:10px;color:#9c9c9c;">10</span>
<div style="left:213px;top:931px;width:2px;height:15px;background:#a6a6a6;"></div>
<span class="t" style="left:216px;top:917.65px;font-size:10px;color:#9c9c9c;">15</span>
<div style="left:280px;top:931px;width:2px;height:15px;background:#a6a6a6;"></div>
<span class="t" style="left:283px;top:917.65px;font-size:10px;color:#9c9c9c;">20</span>
<div style="left:348px;top:931px;width:2px;height:15px;background:#a6a6a6;"></div>
<span class="t" style="left:351px;top:917.65px;font-size:10px;color:#9c9c9c;">25</span>
<div style="left:415px;top:931px;width:2px;height:15px;background:#a6a6a6;"></div>
<span class="t" style="left:418px;top:917.65px;font-size:10px;color:#9c9c9c;">30</span>
<div style="left:482px;top:931px;width:2px;height:15px;background:#a6a6a6;"></div>
<span class="t" style="left:485px;top:917.65px;font-size:10px;color:#9c9c9c;">35</span>
<div style="left:549px;top:931px;width:2px;height:15px;background:#a6a6a6;"></div>
<span class="t" style="left:552px;top:917.65px;font-size:10px;color:#9c9c9c;">40</span>
<div style="left:616px;top:931px;width:2px;height:15px;background:#a6a6a6;"></div>
<span class="t" style="left:619px;top:917.65px;font-size:10px;color:#9c9c9c;">45</span>
<div style="left:683px;top:931px;width:2px;height:15px;background:#a6a6a6;"></div>
<span class="t" style="left:686px;top:917.65px;font-size:10px;color:#9c9c9c;">50</span>
<div style="left:751px;top:931px;width:2px;height:15px;background:#a6a6a6;"></div>
<span class="t" style="left:754px;top:917.65px;font-size:10px;color:#9c9c9c;">55</span>
<div style="left:818px;top:931px;width:2px;height:15px;background:#a6a6a6;"></div>
<span class="t" style="left:821px;top:917.65px;font-size:10px;color:#9c9c9c;">60</span>
<div style="left:885px;top:931px;width:2px;height:15px;background:#a6a6a6;"></div>
<span class="t" style="left:888px;top:917.65px;font-size:10px;color:#9c9c9c;">65</span>
<div style="left:952px;top:931px;width:2px;height:15px;background:#a6a6a6;"></div>
<span class="t" style="left:955px;top:917.65px;font-size:10px;color:#9c9c9c;">70</span>
<div style="left:1019px;top:931px;width:2px;height:15px;background:#a6a6a6;"></div>
<span class="t" style="left:1022px;top:917.65px;font-size:10px;color:#9c9c9c;">75</span>
<div style="left:1086px;top:931px;width:2px;height:15px;background:#a6a6a6;"></div>
<span class="t" style="left:1089px;top:917.65px;font-size:10px;color:#9c9c9c;">80</span>
<div style="left:1154px;top:931px;width:2px;height:15px;background:#a6a6a6;"></div>
<span class="t" style="left:1157px;top:917.65px;font-size:10px;color:#9c9c9c;">85</span>
<div style="left:1221px;top:931px;width:2px;height:15px;background:#a6a6a6;"></div>
<span class="t" style="left:1224px;top:917.65px;font-size:10px;color:#9c9c9c;">90</span>
<div style="left:1288px;top:931px;width:2px;height:15px;background:#a6a6a6;"></div>
<span class="t" style="left:1291px;top:917.65px;font-size:10px;color:#9c9c9c;">95</span>
<div style="left:1355px;top:931px;width:2px;height:15px;background:#a6a6a6;"></div>
<span class="t" style="left:1358px;top:917.65px;font-size:10px;color:#9c9c9c;">100</span>
<div style="left:1422px;top:931px;width:2px;height:15px;background:#a6a6a6;"></div>
<span class="t" style="left:1425px;top:917.65px;font-size:10px;color:#9c9c9c;">105</span>
<div style="left:1489px;top:931px;width:2px;height:15px;background:#a6a6a6;"></div>
<span class="t" style="left:1492px;top:917.65px;font-size:10px;color:#9c9c9c;">110</span>
<div style="left:1557px;top:931px;width:2px;height:15px;background:#a6a6a6;"></div>
<span class="t" style="left:1560px;top:917.65px;font-size:10px;color:#9c9c9c;">115</span>
<div style="left:1624px;top:931px;width:2px;height:15px;background:#a6a6a6;"></div>
<span class="t" style="left:1627px;top:917.65px;font-size:10px;color:#9c9c9c;">120</span>
<div style="left:1652px;top:924px;width:68px;height:18px;background:#2b2b2b;border-radius:2px;"></div>
<span class="t" style="left:1657.5px;top:928.00px;font-size:10.5px;color:#e6e6e6;">1</span>
<svg style="left:1725px;top:920px;" width="190" height="24" viewBox="0 0 190 24"><rect x="4.9" y="6.3" width="2.1" height="11.6" fill="#d2d2d2"/><path d="M7.8 12.1L14.4 6.3V17.9Z" fill="#d2d2d2"/><path d="M14.6 12.1L21.2 6.3V17.9Z" fill="#d2d2d2"/><rect x="29.9" y="6.3" width="2.1" height="11.6" fill="#d2d2d2"/><path d="M32.8 12.1L42.0 6.3V17.9Z" fill="#d2d2d2"/><rect x="53.1" y="2.8" width="0.8" height="18.2" fill="#e8e8e8"/><rect x="51.8" y="6.0" width="3.4" height="12.4" fill="#e58a4f"/><path d="M56.3 12.1L65.4 6.3V17.9Z" fill="#d2d2d2"/><path d="M75.2 12.1L87.8 4.3V19.9Z" fill="#d2d2d2"/><path d="M111.7 12.1L98.6 4.3V19.9Z" fill="#d2d2d2"/><path d="M130.6 12.1L121.5 6.3V17.9Z" fill="#d2d2d2"/><rect x="133.0" y="2.8" width="0.8" height="18.2" fill="#e8e8e8"/><rect x="131.7" y="6.0" width="3.4" height="12.4" fill="#e58a4f"/><path d="M154.0 12.1L144.9 6.3V17.9Z" fill="#d2d2d2"/><rect x="154.9" y="6.3" width="2.1" height="11.6" fill="#d2d2d2"/><path d="M172.3 12.1L165.7 6.3V17.9Z" fill="#d2d2d2"/><path d="M179.1 12.1L172.5 6.3V17.9Z" fill="#d2d2d2"/><rect x="179.9" y="6.3" width="2.2" height="11.6" fill="#d2d2d2"/></svg>
<svg style="left:7px;top:955px;" width="4" height="22" viewBox="0 0 4 22"><rect x="0" y="0" width="1" height="1" fill="#7a7a7a"/><rect x="3" y="0" width="1" height="1" fill="#7a7a7a"/><rect x="0" y="3" width="1" height="1" fill="#7a7a7a"/><rect x="3" y="3" width="1" height="1" fill="#7a7a7a"/><rect x="0" y="6" width="1" height="1" fill="#7a7a7a"/><rect x="3" y="6" width="1" height="1" fill="#7a7a7a"/><rect x="0" y="9" width="1" height="1" fill="#7a7a7a"/><rect x="3" y="9" width="1" height="1" fill="#7a7a7a"/><rect x="0" y="12" width="1" height="1" fill="#7a7a7a"/><rect x="3" y="12" width="1" height="1" fill="#7a7a7a"/><rect x="0" y="15" width="1" height="1" fill="#7a7a7a"/><rect x="3" y="15" width="1" height="1" fill="#7a7a7a"/><rect x="0" y="18" width="1" height="1" fill="#7a7a7a"/><rect x="3" y="18" width="1" height="1" fill="#7a7a7a"/></svg>
<div style="left:18px;top:955px;width:68px;height:23px;background:#2b2b2b;border-radius:2px;"></div>
<span class="t" style="left:24px;top:960.80px;font-size:10.5px;color:#e6e6e6;">1</span>
<div style="left:94px;top:955px;width:68px;height:23px;background:#2b2b2b;border-radius:2px;"></div>
<span class="t" style="left:100px;top:960.80px;font-size:10.5px;color:#e6e6e6;">1</span>
<div style="left:169px;top:955px;width:1280px;height:23px;background:#3a3a3a;border-radius:2px;"></div>
<div style="left:176px;top:957px;width:770px;height:19px;background:#646464;border-radius:2px;"></div>
<div style="left:180px;top:960px;width:13px;height:13px;background:#a6a6a6;border-radius:2px;"></div>
<span class="t" style="left:196.5px;top:960.80px;font-size:10.5px;color:#e0e0e0;">1</span>
<span class="t" style="left:907.5px;top:960.80px;font-size:10.5px;color:#e0e0e0;">120</span>
<div style="left:929px;top:960px;width:13px;height:13px;background:#a6a6a6;border-radius:2px;"></div>
<div style="left:1456px;top:955px;width:68px;height:23px;background:#2b2b2b;border-radius:2px;"></div>
<span class="t" style="left:1461.5px;top:960.80px;font-size:10.5px;color:#e6e6e6;">120</span>
<div style="left:1532px;top:955px;width:68px;height:23px;background:#2b2b2b;border-radius:2px;"></div>
<span class="t" style="left:1537.5px;top:960.80px;font-size:10.5px;color:#e6e6e6;">200</span>
<svg style="left:1606px;top:963px;" width="10" height="6" viewBox="0 0 10 6"><path d="M.6 .5H9.400L5 5.300Z" fill="#5a5a5a" stroke="#9a9a9a" stroke-width="1"/></svg>
<div style="left:1622.5px;top:954px;width:101.5px;height:24.5px;background:#414141;border:1px solid #4f4f4f;border-radius:3px;"></div>
<span class="t" style="left:1628px;top:961.04px;font-size:11px;color:#d2d2d2;">No Anim Layer</span>
<svg style="left:1734.5px;top:963px;" width="10" height="6" viewBox="0 0 10 6"><path d="M.6 .5H9.400L5 5.300Z" fill="#5a5a5a" stroke="#9a9a9a" stroke-width="1"/></svg>
<div style="left:1751px;top:954px;width:101.5px;height:24.5px;background:#414141;border:1px solid #4f4f4f;border-radius:3px;"></div>
<span class="t" style="left:1757.5px;top:961.04px;font-size:11px;color:#d2d2d2;">No Character Set</span>
<svg style="left:1861px;top:957px;" width="18" height="18" viewBox="0 0 18 18"><path d="M2.300 6.500A7.200 7.200 0 0 1 15.800 6.500M15.700 11.500A7.200 7.200 0 0 1 2.200 11.500" fill="none" stroke="#cfcfcf" stroke-width="1.200"/><path d="M0.800 3.500L5.200 4.800L1.800 8Z" fill="#cfcfcf"/><path d="M17.200 14.500L12.800 13.200L16.200 10Z" fill="#cfcfcf"/><path d="M4.300 9H13.800" stroke="#e58a4f" stroke-width="1.300"/><rect x="7.400" y="4.900" width="3.200" height="8.300" fill="#e58a4f"/></svg>
<svg style="left:1889px;top:956px;" width="22" height="22" viewBox="0 0 22 22"><circle cx="6" cy="5" r="2.600" fill="none" stroke="#cfcfcf" stroke-width="1.300"/><circle cx="6" cy="5" r="4.200" fill="none" stroke="#cfcfcf" stroke-width="1.400" stroke-dasharray="1.500 1.800"/><circle cx="15.500" cy="6.500" r="2" fill="#e58a4f"/><path d="M14.500 9L10 10.500L8.500 13.500M14.500 9L13 14L16 16.500L15.500 21M13 14L9.500 17L6.500 17.500M15 10.500L18.500 12.500L20 11" stroke="#e58a4f" stroke-width="1.800" fill="none" stroke-linecap="round"/></svg>
<svg style="left:7px;top:988px;" width="4" height="22" viewBox="0 0 4 22"><rect x="0" y="0" width="1" height="1" fill="#7a7a7a"/><rect x="3" y="0" width="1" height="1" fill="#7a7a7a"/><rect x="0" y="3" width="1" height="1" fill="#7a7a7a"/><rect x="3" y="3" width="1" height="1" fill="#7a7a7a"/><rect x="0" y="6" width="1" height="1" fill="#7a7a7a"/><rect x="3" y="6" width="1" height="1" fill="#7a7a7a"/><rect x="0" y="9" width="1" height="1" fill="#7a7a7a"/><rect x="3" y="9" width="1" height="1" fill="#7a7a7a"/><rect x="0" y="12" width="1" height="1" fill="#7a7a7a"/><rect x="3" y="12" width="1" height="1" fill="#7a7a7a"/><rect x="0" y="15" width="1" height="1" fill="#7a7a7a"/><rect x="3" y="15" width="1" height="1" fill="#7a7a7a"/><rect x="0" y="18" width="1" height="1" fill="#7a7a7a"/><rect x="3" y="18" width="1" height="1" fill="#7a7a7a"/></svg>
<span class="t" style="left:28.5px;top:994.23px;font-size:10.8px;color:#e4e4e4;">MEL</span>
<div style="left:63px;top:988px;width:617px;height:23px;background:#2b2b2b;border-radius:2px;"></div>
<div style="left:686px;top:988px;width:1201px;height:23px;background:#2b2b2b;border-radius:2px;"></div>
<div style="left:1892px;top:990px;width:19px;height:19px;background:#c8c8c8;"></div>
<svg style="left:1892px;top:990px;" width="19" height="19" viewBox="0 0 19 19"><path d="M1 3.500H18" stroke="#555" stroke-width="1"/><path d="M2 1.500H3M4.500 1.500H5.500M7 1.500H8" stroke="#444" stroke-width="1"/><text x="9.500" y="14.500" text-anchor="middle" font-size="9.500" font-weight="bold" fill="#333" font-family="Liberation Sans, sans-serif">{;}</text></svg>
<div style="left:0px;top:1016px;width:1920px;height:1px;background:#2f2f2f;"></div>
<svg style="left:7px;top:1019px;" width="4" height="15" viewBox="0 0 4 15"><rect x="0" y="0" width="1" height="1" fill="#7a7a7a"/><rect x="3" y="0" width="1" height="1" fill="#7a7a7a"/><rect x="0" y="3" width="1" height="1" fill="#7a7a7a"/><rect x="3" y="3" width="1" height="1" fill="#7a7a7a"/><rect x="0" y="6" width="1" height="1" fill="#7a7a7a"/><rect x="3" y="6" width="1" height="1" fill="#7a7a7a"/><rect x="0" y="9" width="1" height="1" fill="#7a7a7a"/><rect x="3" y="9" width="1" height="1" fill="#7a7a7a"/><rect x="0" y="12" width="1" height="1" fill="#7a7a7a"/><rect x="3" y="12" width="1" height="1" fill="#7a7a7a"/></svg>
<span class="t" style="left:29px;top:1023.22px;font-size:9.7px;color:#cfcfcf;">Select Tool: select an object</span>
</div>
</body>
</html>
